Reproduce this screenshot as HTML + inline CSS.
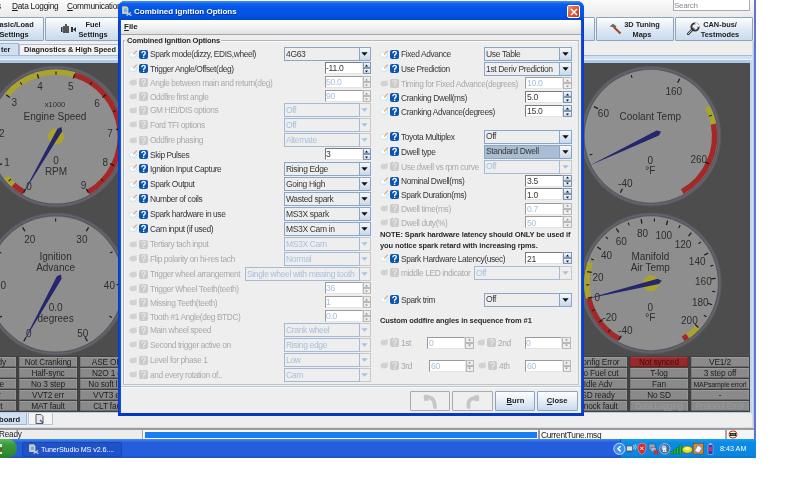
<!DOCTYPE html><html><head><meta charset="utf-8"><style>
*{margin:0;padding:0;box-sizing:border-box}
html,body{width:800px;height:480px;overflow:hidden;background:#fff}
body{position:relative;font-family:"Liberation Sans",sans-serif;font-size:8px;color:#222}
.ab{position:absolute}
.t{position:absolute;white-space:nowrap;line-height:1;will-change:transform}
.tb{position:absolute;border:1px solid #8ea4bd;border-radius:1px;background:linear-gradient(#fdfeff,#dde8f4 55%,#c9dbee);}
.bt{position:absolute;white-space:nowrap;will-change:transform;font-weight:bold;font-size:7.4px;line-height:1;color:#222;text-align:center}
.cell{position:absolute;height:10px;width:58px;background:#8a8a8a;border-top:1px solid #9c9c9c;border-left:1px solid #7a7a7a;border-bottom:1px solid #6c6c6c;border-right:1px solid #959595;font-size:8.3px;letter-spacing:-0.15px;line-height:9px;text-align:center;color:#1e1e1e;white-space:nowrap;overflow:visible;will-change:transform}
</style></head><body>

<div class="ab" style="left:0;top:0;width:756px;height:17px;background:linear-gradient(#fbfbfb,#f1f1f1 60%,#eaeaea)"></div>
<div class="t" style="left:-3px;top:1.8px;font-size:8.3px;letter-spacing:-0.2px;color:#151515">s</div>
<div class="t" style="left:12px;top:1.8px;font-size:8.3px;letter-spacing:-0.25px;color:#151515"><u>D</u>ata Logging</div>
<div class="t" style="left:66.7px;top:1.8px;font-size:8.3px;letter-spacing:-0.25px;color:#151515"><u>C</u>ommunications</div>
<div class="ab" style="left:673.4px;top:-1px;width:76.6px;height:12px;background:#fff;border:1px solid #a4acb6"></div>
<div class="t" style="left:674.4px;top:2.2px;font-size:8px;letter-spacing:-0.3px;color:#8a8a8a">Search</div>
<div class="ab" style="left:0;top:17px;width:754px;height:38px;background:#eeeeee"></div>
<div class="tb" style="left:-34px;top:17px;width:77.75px;height:24px"></div>
<div class="tb" style="left:45px;top:17px;width:79.00px;height:24px"></div>
<div class="tb" style="left:517px;top:17px;width:77.75px;height:24px"></div>
<div class="tb" style="left:596.25px;top:17px;width:77.50px;height:24px"></div>
<div class="tb" style="left:675px;top:17px;width:77.70px;height:24px"></div>
<div class="bt" style="left:-16px;top:20.5px;width:60px">Basic/Load</div>
<div class="bt" style="left:-16px;top:30.7px;width:60px">Settings</div>
<div class="bt" style="left:68px;top:20.5px;width:50px">Fuel</div>
<div class="bt" style="left:68px;top:30.7px;width:50px">Settings</div>
<div class="bt" style="left:617px;top:20.5px;width:50px">3D Tuning</div>
<div class="bt" style="left:617px;top:30.7px;width:50px">Maps</div>
<div class="bt" style="left:695px;top:20.5px;width:50px">CAN-bus/</div>
<div class="bt" style="left:695px;top:30.7px;width:50px">Testmodes</div>
<svg class="ab" style="left:60px;top:20px" width="20" height="16" viewBox="0 0 20 16">
<rect x="1" y="7" width="1.5" height="5" fill="#333"/><rect x="3" y="6" width="6" height="7" fill="#555"/><rect x="5" y="4" width="2" height="2" fill="#555"/>
<rect x="11" y="7" width="2" height="5" fill="#333"/><path d="M13 9.5 L16 7 L16 12 Z" fill="#333"/></svg>
<svg class="ab" style="left:609px;top:23px" width="14" height="12" viewBox="0 0 14 12">
<path d="M0.5 3.5 L4 0.8 L7.5 3.2 L5.5 5.5 L3.5 4 Z" fill="#6a6a6a"/><path d="M5 4.2 L11.5 10.5" stroke="#a4482a" stroke-width="2.2"/></svg>
<svg class="ab" style="left:686px;top:22px" width="14" height="14" viewBox="0 0 14 14">
<path d="M7.2 6.8 L2.2 11.8" stroke="#333" stroke-width="2.6" stroke-linecap="round"/><path d="M7.2 6.8 L2.2 11.8" stroke="#ddd" stroke-width="1" stroke-linecap="round"/>
<circle cx="9" cy="5" r="3.6" fill="none" stroke="#333" stroke-width="1.9"/><path d="M9.5 1 L13 4.5" stroke="#eee" stroke-width="2.2"/></svg>
<div class="ab" style="left:-5px;top:43px;width:24px;height:13px;background:#cfe0f3;border:1px solid #9fb6cf;border-bottom:none"></div>
<div class="t" style="left:1px;top:46px;font-weight:bold;font-size:7.4px">ter</div>
<div class="ab" style="left:19px;top:44px;width:110px;height:11px;background:#f2f2f2;border:1px solid #b0bccb;border-bottom:none;border-left:1px solid #a9bcd3"></div>
<div class="t" style="left:24px;top:46px;font-weight:bold;font-size:7.4px">Diagnostics &amp; High Speed Loggers</div>
<div class="ab" style="left:0;top:55px;width:754px;height:1px;background:#a5bad2"></div>
<div class="ab" style="left:0;top:56px;width:754px;height:3px;background:#cde0f4"></div>
<div class="ab" style="left:0;top:59px;width:754px;height:1px;background:#eef3f8"></div>
<div class="ab" style="left:0;top:60px;width:754px;height:3px;background:#b0c8e6"></div>
<div class="ab" style="left:750px;top:60px;width:2px;height:353px;background:#c4d6ec"></div>
<div class="ab" style="left:752px;top:41px;width:2px;height:386px;background:linear-gradient(90deg,#dde8f4,#a9bfdc)"></div>
<div class="ab" style="left:0;top:63px;width:750px;height:349px;background:#4d4d4d"></div>
<div class="ab" style="left:0;top:412px;width:752px;height:1px;background:#b8cce4"></div>
<div class="ab" style="left:0;top:356px;width:750px;height:56px;background:#404040"></div>
<div class="cell" style="left:-42.25px;top:357px;text-align:right;padding-right:9px;">Fuel Ready</div>
<div class="cell" style="left:-42.25px;top:368px;text-align:right;padding-right:0px;"></div>
<div class="cell" style="left:-42.25px;top:379px;text-align:right;padding-right:11px;">Idle active</div>
<div class="cell" style="left:-42.25px;top:390px;text-align:right;padding-right:14.5px;">VVT1 err</div>
<div class="cell" style="left:-42.25px;top:401px;text-align:right;padding-right:12.5px;">EGT fault</div>
<div class="cell" style="left:18.75px;top:357px;">Not Cranking</div>
<div class="cell" style="left:18.75px;top:368px;">Half-sync</div>
<div class="cell" style="left:18.75px;top:379px;">No 3 step</div>
<div class="cell" style="left:18.75px;top:390px;">VVT2 err</div>
<div class="cell" style="left:18.75px;top:401px;">MAT fault</div>
<div class="cell" style="left:79.75px;top:357px;">ASE OFF</div>
<div class="cell" style="left:79.75px;top:368px;">N2O 1 off</div>
<div class="cell" style="left:79.75px;top:379px;">No soft limit</div>
<div class="cell" style="left:79.75px;top:390px;">VVT3 err</div>
<div class="cell" style="left:79.75px;top:401px;">CLT fault</div>
<div class="cell" style="left:568.5px;top:357px;">Config Error</div>
<div class="cell" style="left:568.5px;top:368px;">No Fuel cut</div>
<div class="cell" style="left:568.5px;top:379px;">Idle Adv</div>
<div class="cell" style="left:568.5px;top:390px;">SD ready</div>
<div class="cell" style="left:568.5px;top:401px;">Knock fault</div>
<div class="cell" style="left:629.5px;top:357px;background:#9a2a2a;color:#3a0a0a;border-color:#b03a3a #8a2020 #7a1a1a #8a2424;">Not synced</div>
<div class="cell" style="left:629.5px;top:368px;">T-log</div>
<div class="cell" style="left:629.5px;top:379px;">Fan</div>
<div class="cell" style="left:629.5px;top:390px;">No SD</div>
<div class="cell" style="left:629.5px;top:401px;color:#9a9a9a;">Data Logging</div>
<div class="cell" style="left:690.5px;top:357px;">VE1/2</div>
<div class="cell" style="left:690.5px;top:368px;">3 step off</div>
<div class="cell" style="left:690.5px;top:379px;font-size:7px;letter-spacing:-0.2px;">MAPsample error!</div>
<div class="cell" style="left:690.5px;top:390px;">-</div>
<div class="cell" style="left:690.5px;top:401px;color:#9a9a9a;">Protocol Error</div>
<div class="ab" style="left:0;top:413px;width:752px;height:15px;background:#eeeeee"></div>
<div class="ab" style="left:-5px;top:413px;width:32px;height:12px;background:#cfe0f3;border:1px solid #9fb6cf;border-top:none"></div>
<div class="t" style="left:-1px;top:416px;font-weight:bold;font-size:7.6px">board</div>
<div class="ab" style="left:28px;top:413px;width:25px;height:12px;background:#f4f4f4;border:1px solid #b8c4d2;border-top:none"></div>
<svg class="ab" style="left:35px;top:414px" width="10" height="10" viewBox="0 0 10 10"><path d="M1 0.5 H6 L8 2.5 V9.5 H1 Z" fill="#e8e8f0" stroke="#333" stroke-width="0.8"/><path d="M5 6 L8 9" stroke="#557" stroke-width="1.2"/></svg>
<div class="ab" style="left:0;top:427px;width:754px;height:1px;background:#d2deec"></div>
<div class="ab" style="left:0;top:428px;width:754px;height:11px;background:#ededed;border-top:2px solid #9c9c9c"></div>
<div class="t" style="left:-1px;top:431px;font-size:8.2px;letter-spacing:-0.2px">Ready</div>
<div class="ab" style="left:142px;top:430px;width:396px;height:9px;background:#f8f8f8;border-left:1px solid #a8a29a"></div>
<div class="ab" style="left:144.5px;top:431.5px;width:392.5px;height:6.3px;background:#1a7ef0"></div>
<div class="ab" style="left:538px;top:430px;width:2px;height:9px;background:#9a9a9a"></div>
<div class="ab" style="left:540px;top:430px;width:185px;height:9px;background:#fafafa"></div>
<div class="t" style="left:541px;top:431.2px;font-size:8.4px;letter-spacing:-0.3px">CurrentTune.msq</div>
<div class="ab" style="left:725px;top:430px;width:2px;height:9px;background:#a6a6a6"></div>
<div class="ab" style="left:727px;top:430px;width:26px;height:9px;background:#f4f4f4"></div>
<svg class="ab" style="left:728px;top:430px" width="10" height="9" viewBox="0 0 10 9"><ellipse cx="5" cy="4.5" rx="4" ry="3.6" fill="none" stroke="#c22" stroke-width="1"/><rect x="2" y="3" width="6" height="3" fill="#222"/><rect x="3" y="3.8" width="4" height="1.4" fill="#3a3"/></svg>
<div class="ab" style="left:754px;top:0;width:2px;height:439px;background:#6472d6"></div>
<div class="ab" style="left:0;top:439px;width:756px;height:19px;background:linear-gradient(#3f8cf3,#245edc 18%,#245edc 85%,#1d4fc0)"></div>
<div class="ab" style="left:-40px;top:439px;width:57px;height:19px;border-radius:0 10px 10px 0;background:linear-gradient(#5dbb5d,#3a9a3a 30%,#2f8a2f 80%,#2c7a2c)"></div>
<div class="ab" style="left:22px;top:442px;width:100px;height:14.5px;border-radius:2px;background:#1e52c8;border:1px solid #1a48b0"></div>
<svg class="ab" style="left:29px;top:444px" width="10" height="10" viewBox="0 0 10 10"><path d="M0.5 0.8 H5 L6 2 V7.5 H0.5 Z" fill="#b8cce4" stroke="#e8d890" stroke-width="0.8"/><path d="M2 2.5 H5 V6 H2 Z" fill="#6f9ad0" opacity="0.7"/><path d="M4 7 L9.5 9.5 M4.5 9.5 L9 6.5" stroke="#c8ccd4" stroke-width="1.3"/></svg>
<div class="ab" style="left:0;top:444px;width:1.5px;height:3px;background:#f0e8d8"></div>
<div class="ab" style="left:0;top:448px;width:1.5px;height:3px;background:#6a5a2a"></div>
<div class="ab" style="left:0;top:452px;width:1.5px;height:2px;background:#e8e8d0"></div>
<div class="t" style="left:41px;top:445.6px;font-size:7.2px;letter-spacing:-0.1px;color:#fff">TunerStudio MS v2.6....</div>
<div class="ab" style="left:620.3px;top:439px;width:135.7px;height:19px;background:linear-gradient(#17a0f3,#0c8ae4 20%,#0b86e0 85%,#0a78d0);border-left:1px solid #0a5bd0"></div>
<div class="t" style="left:720px;top:445px;font-size:7.2px;color:#fff">8:43 AM</div>
<svg class="ab" style="left:610px;top:441px" width="110" height="16" viewBox="0 0 110 16">
<circle cx="9.4" cy="7.8" r="5.6" fill="#3d8ef0" stroke="#cfe6ff" stroke-width="0.9"/><path d="M10.6 5.2 L8 7.8 L10.6 10.4" stroke="#fff" stroke-width="1.5" fill="none"/>
<rect x="16.5" y="5" width="6" height="5" fill="#d8e0ea" stroke="#44526a" stroke-width="0.7"/><rect x="17.5" y="10" width="4" height="1.5" fill="#556"/><path d="M23.5 4 q1.6 2 0 4 M25 3 q2.6 3 0 6" stroke="#e8f0ff" stroke-width="0.7" fill="none"/>
<path d="M28 3.5 L31.9 2 L35.8 3.5 L35.8 7.5 Q35.8 11.5 31.9 13.5 Q28 11.5 28 7.5 Z" fill="#d42a2a" stroke="#f4c0c0" stroke-width="0.5"/><path d="M30.3 5.8 L33.5 9 M33.5 5.8 L30.3 9" stroke="#fff" stroke-width="1"/>
<rect x="39" y="3" width="6" height="6" fill="#9aa4c0" stroke="#445" stroke-width="0.5"/><rect x="41" y="6.5" width="5" height="4" fill="#b0b8d0" stroke="#445" stroke-width="0.4"/><path d="M44 9 L48.5 13.5 M48.5 9 L44 13.5" stroke="#e02020" stroke-width="1.4"/>
<circle cx="54.8" cy="7.8" r="5.2" fill="#48689a" stroke="#c8d4e8" stroke-width="0.7"/><circle cx="54" cy="6.8" r="2.5" fill="#b8c8e0"/><text x="52.6" y="10.6" font-size="7" fill="#fff" font-family="Liberation Sans" font-weight="bold">a</text>
<path d="M61 13 h2 v-2.5 h-2z M63.8 13 h2 v-4.5 h-2z M66.6 13 h2 v-6.5 h-2z M69.4 13 h2 v-9 h-2z" fill="#22c022" stroke="#0a600a" stroke-width="0.4"/>
<ellipse cx="77.3" cy="8.6" rx="5.2" ry="3.6" fill="#e8e020" stroke="#6a6010" stroke-width="0.7"/><ellipse cx="77.3" cy="7.6" rx="2.5" ry="1.6" fill="#fff890"/>
<rect x="83.2" y="2.5" width="10" height="10.5" fill="#e0882a" stroke="#5a4020" stroke-width="0.5"/><path d="M84.5 10 L88 4 L92 7 L89 12 Z" fill="#f0f4ff" stroke="#4a6ab0" stroke-width="0.6"/>
<rect x="98" y="3.5" width="5" height="10" rx="1" fill="#2a3ad0" stroke="#c0c8e8" stroke-width="0.6"/><rect x="99.5" y="2.2" width="2" height="1.5" fill="#c0c8e8"/><rect x="99" y="6" width="3" height="4" fill="#e03030"/>
</svg>
<svg class="ab" style="left:0;top:63px;will-change:transform" width="750" height="294" viewBox="0 63 750 294">
<circle cx="56" cy="136.5" r="71" fill="#58585f"/>
<circle cx="56" cy="136.5" r="69.1" fill="none" stroke="#65656d" stroke-width="1.4"/>
<circle cx="56" cy="136.5" r="67.1" fill="#8e8e8e"/>
<path d="M23.85 192.19 A64.3 64.3 0 0 1 13.31 184.58" fill="none" stroke="#a42828" stroke-width="5.4"/>
<path d="M13.31 184.58 A64.3 64.3 0 0 1 6.24 177.23" fill="none" stroke="#aaa42c" stroke-width="5.4"/>
<path d="M6.74 95.17 A64.3 64.3 0 0 1 74.48 74.91" fill="none" stroke="#aaa42c" stroke-width="5.4"/>
<path d="M74.48 74.91 A64.3 64.3 0 0 1 88.15 192.19" fill="none" stroke="#a42828" stroke-width="5.4"/>
<line x1="25.75" y1="188.89" x2="23.50" y2="192.79" stroke="#1c1c1c" stroke-width="1.3"/>
<line x1="1.94" y1="163.65" x2="-2.09" y2="165.67" stroke="#1c1c1c" stroke-width="1.3"/>
<line x1="-4.09" y1="129.48" x2="-8.56" y2="128.95" stroke="#1c1c1c" stroke-width="1.3"/>
<line x1="9.65" y1="97.61" x2="6.21" y2="94.72" stroke="#1c1c1c" stroke-width="1.3"/>
<line x1="38.65" y1="78.54" x2="37.36" y2="74.23" stroke="#1c1c1c" stroke-width="1.3"/>
<line x1="73.35" y1="78.54" x2="74.64" y2="74.23" stroke="#1c1c1c" stroke-width="1.3"/>
<line x1="102.35" y1="97.61" x2="105.79" y2="94.72" stroke="#1c1c1c" stroke-width="1.3"/>
<line x1="116.09" y1="129.48" x2="120.56" y2="128.95" stroke="#1c1c1c" stroke-width="1.3"/>
<line x1="110.06" y1="163.65" x2="114.09" y2="165.67" stroke="#1c1c1c" stroke-width="1.3"/>
<line x1="86.25" y1="188.89" x2="88.50" y2="192.79" stroke="#1c1c1c" stroke-width="1.3"/>
<line x1="10.90" y1="179.05" x2="8.72" y2="181.11" stroke="#1c1c1c" stroke-width="1.1"/>
<line x1="-5.06" y1="147.27" x2="-8.01" y2="147.79" stroke="#1c1c1c" stroke-width="1.1"/>
<line x1="-0.93" y1="111.94" x2="-3.68" y2="110.75" stroke="#1c1c1c" stroke-width="1.1"/>
<line x1="21.93" y1="84.70" x2="20.28" y2="82.19" stroke="#1c1c1c" stroke-width="1.1"/>
<line x1="56.00" y1="74.50" x2="56.00" y2="71.50" stroke="#1c1c1c" stroke-width="1.1"/>
<line x1="90.07" y1="84.70" x2="91.72" y2="82.19" stroke="#1c1c1c" stroke-width="1.1"/>
<line x1="112.93" y1="111.94" x2="115.68" y2="110.75" stroke="#1c1c1c" stroke-width="1.1"/>
<line x1="117.06" y1="147.27" x2="120.01" y2="147.79" stroke="#1c1c1c" stroke-width="1.1"/>
<line x1="101.10" y1="179.05" x2="103.28" y2="181.11" stroke="#1c1c1c" stroke-width="1.1"/>
<text x="29.00" y="189.60" font-size="10" text-anchor="middle" fill="#2e2e2e" font-family="Liberation Sans">0</text>
<text x="7.00" y="166.40" font-size="10" text-anchor="middle" fill="#2e2e2e" font-family="Liberation Sans">1</text>
<text x="1.70" y="136.90" font-size="10" text-anchor="middle" fill="#2e2e2e" font-family="Liberation Sans">2</text>
<text x="14.20" y="106.40" font-size="10" text-anchor="middle" fill="#2e2e2e" font-family="Liberation Sans">3</text>
<text x="40.00" y="89.60" font-size="10" text-anchor="middle" fill="#2e2e2e" font-family="Liberation Sans">4</text>
<text x="70.80" y="89.80" font-size="10" text-anchor="middle" fill="#2e2e2e" font-family="Liberation Sans">5</text>
<text x="97.00" y="106.60" font-size="10" text-anchor="middle" fill="#2e2e2e" font-family="Liberation Sans">6</text>
<text x="110.00" y="136.60" font-size="10" text-anchor="middle" fill="#2e2e2e" font-family="Liberation Sans">7</text>
<text x="105.40" y="166.40" font-size="10" text-anchor="middle" fill="#2e2e2e" font-family="Liberation Sans">8</text>
<text x="83.50" y="188.90" font-size="10" text-anchor="middle" fill="#2e2e2e" font-family="Liberation Sans">9</text>
<text x="55.00" y="107.04" font-size="7.6" text-anchor="middle" fill="#2e2e2e" font-family="Liberation Sans">x1000</text>
<text x="55.00" y="119.60" font-size="10" text-anchor="middle" fill="#2e2e2e" font-family="Liberation Sans">Engine Speed</text>
<text x="56.00" y="163.90" font-size="10" text-anchor="middle" fill="#2e2e2e" font-family="Liberation Sans">0</text>
<text x="56.00" y="174.60" font-size="10" text-anchor="middle" fill="#2e2e2e" font-family="Liberation Sans">RPM</text>
<circle cx="56" cy="136.5" r="8" fill="#aaa42c"/>
<path d="M61.50 126.97 L57.41 128.65 L22.00 195.39 L62.09 131.35 Z" fill="#26266c"/>
<circle cx="55.6" cy="284" r="71.5" fill="#58585f"/>
<circle cx="55.6" cy="284" r="69.6" fill="none" stroke="#65656d" stroke-width="1.4"/>
<circle cx="55.6" cy="284" r="67.6" fill="#8e8e8e"/>
<line x1="26.03" y1="337.35" x2="23.84" y2="341.29" stroke="#1c1c1c" stroke-width="1.3"/>
<line x1="-5.40" y1="284.64" x2="-9.90" y2="284.69" stroke="#1c1c1c" stroke-width="1.3"/>
<line x1="24.92" y1="231.28" x2="22.65" y2="227.39" stroke="#1c1c1c" stroke-width="1.3"/>
<line x1="86.28" y1="231.28" x2="88.55" y2="227.39" stroke="#1c1c1c" stroke-width="1.3"/>
<line x1="116.60" y1="284.64" x2="121.10" y2="284.69" stroke="#1c1c1c" stroke-width="1.3"/>
<line x1="85.17" y1="337.35" x2="87.36" y2="341.29" stroke="#1c1c1c" stroke-width="1.3"/>
<line x1="1.92" y1="316.00" x2="-0.66" y2="317.54" stroke="#1c1c1c" stroke-width="1.1"/>
<line x1="1.26" y1="253.13" x2="-1.35" y2="251.65" stroke="#1c1c1c" stroke-width="1.1"/>
<line x1="55.60" y1="221.50" x2="55.60" y2="218.50" stroke="#1c1c1c" stroke-width="1.1"/>
<line x1="109.94" y1="253.13" x2="112.55" y2="251.65" stroke="#1c1c1c" stroke-width="1.1"/>
<line x1="109.28" y1="316.00" x2="111.86" y2="317.54" stroke="#1c1c1c" stroke-width="1.1"/>
<text x="28.75" y="336.70" font-size="10" text-anchor="middle" fill="#2e2e2e" font-family="Liberation Sans">0</text>
<text x="0.60" y="289.20" font-size="10" text-anchor="middle" fill="#2e2e2e" font-family="Liberation Sans">10</text>
<text x="29.70" y="243.00" font-size="10" text-anchor="middle" fill="#2e2e2e" font-family="Liberation Sans">20</text>
<text x="81.90" y="243.00" font-size="10" text-anchor="middle" fill="#2e2e2e" font-family="Liberation Sans">30</text>
<text x="109.40" y="289.20" font-size="10" text-anchor="middle" fill="#2e2e2e" font-family="Liberation Sans">40</text>
<text x="82.80" y="336.70" font-size="10" text-anchor="middle" fill="#2e2e2e" font-family="Liberation Sans">50</text>
<text x="55.60" y="260.20" font-size="10" text-anchor="middle" fill="#2e2e2e" font-family="Liberation Sans">Ignition</text>
<text x="55.60" y="271.10" font-size="10" text-anchor="middle" fill="#2e2e2e" font-family="Liberation Sans">Advance</text>
<text x="55.60" y="311.10" font-size="10" text-anchor="middle" fill="#2e2e2e" font-family="Liberation Sans">0.0</text>
<text x="55.60" y="321.70" font-size="10" text-anchor="middle" fill="#2e2e2e" font-family="Liberation Sans">degrees</text>
<path d="M60.93 274.38 L56.87 276.13 L22.63 343.47 L61.60 278.75 Z" fill="#26266c"/>
<circle cx="651" cy="136.25" r="70.3" fill="#58585f"/>
<circle cx="651" cy="136.25" r="68.39999999999999" fill="none" stroke="#65656d" stroke-width="1.4"/>
<circle cx="651" cy="136.25" r="66.39999999999999" fill="#8e8e8e"/>
<path d="M707.41 106.88 A63.599999999999994 63.599999999999994 0 0 1 713.43 124.11" fill="none" stroke="#aaa42c" stroke-width="5.4"/>
<path d="M713.43 124.11 A63.599999999999994 63.599999999999994 0 0 1 682.22 191.66" fill="none" stroke="#a42828" stroke-width="5.4"/>
<line x1="622.47" y1="188.80" x2="620.32" y2="192.76" stroke="#1c1c1c" stroke-width="1.3"/>
<line x1="597.96" y1="108.64" x2="593.97" y2="106.56" stroke="#1c1c1c" stroke-width="1.3"/>
<line x1="677.68" y1="82.73" x2="679.69" y2="78.71" stroke="#1c1c1c" stroke-width="1.3"/>
<line x1="704.97" y1="161.99" x2="709.04" y2="163.93" stroke="#1c1c1c" stroke-width="1.3"/>
<line x1="592.38" y1="154.17" x2="589.51" y2="155.05" stroke="#1c1c1c" stroke-width="1.1"/>
<line x1="632.06" y1="77.95" x2="631.13" y2="75.10" stroke="#1c1c1c" stroke-width="1.1"/>
<line x1="708.96" y1="116.29" x2="711.80" y2="115.32" stroke="#1c1c1c" stroke-width="1.1"/>
<text x="625.30" y="187.00" font-size="10" text-anchor="middle" fill="#2e2e2e" font-family="Liberation Sans">-40</text>
<text x="603.40" y="116.60" font-size="10" text-anchor="middle" fill="#2e2e2e" font-family="Liberation Sans">60</text>
<text x="673.75" y="94.85" font-size="10" text-anchor="middle" fill="#2e2e2e" font-family="Liberation Sans">160</text>
<text x="698.75" y="163.00" font-size="10" text-anchor="middle" fill="#2e2e2e" font-family="Liberation Sans">260</text>
<text x="650.30" y="119.85" font-size="10" text-anchor="middle" fill="#2e2e2e" font-family="Liberation Sans">Coolant Temp</text>
<text x="650.30" y="163.60" font-size="10" text-anchor="middle" fill="#2e2e2e" font-family="Liberation Sans">0</text>
<text x="650.30" y="174.10" font-size="10" text-anchor="middle" fill="#2e2e2e" font-family="Liberation Sans">°F</text>
<path d="M660.93 131.51 L656.61 130.58 L589.62 165.52 L658.93 135.46 Z" fill="#26266c"/>
<circle cx="651" cy="283.25" r="70.8" fill="#58585f"/>
<circle cx="651" cy="283.25" r="68.89999999999999" fill="none" stroke="#65656d" stroke-width="1.4"/>
<circle cx="651" cy="283.25" r="66.89999999999999" fill="#8e8e8e"/>
<path d="M619.44 339.04 A64.1 64.1 0 0 1 588.72 298.43" fill="none" stroke="#a42828" stroke-width="5.4"/>
<path d="M588.72 298.43 A64.1 64.1 0 0 1 590.39 262.38" fill="none" stroke="#aaa42c" stroke-width="5.4"/>
<path d="M697.88 326.97 A64.1 64.1 0 0 1 687.49 335.95" fill="none" stroke="#aaa42c" stroke-width="5.4"/>
<path d="M687.49 335.95 A64.1 64.1 0 0 1 683.05 338.76" fill="none" stroke="#a42828" stroke-width="5.4"/>
<line x1="621.31" y1="335.73" x2="619.09" y2="339.65" stroke="#1c1c1c" stroke-width="1.3"/>
<line x1="602.76" y1="319.43" x2="599.16" y2="322.13" stroke="#1c1c1c" stroke-width="1.3"/>
<line x1="592.31" y1="297.07" x2="587.93" y2="298.10" stroke="#1c1c1c" stroke-width="1.3"/>
<line x1="591.69" y1="272.39" x2="587.26" y2="271.58" stroke="#1c1c1c" stroke-width="1.3"/>
<line x1="601.01" y1="249.53" x2="597.28" y2="247.01" stroke="#1c1c1c" stroke-width="1.3"/>
<line x1="618.71" y1="232.32" x2="616.30" y2="228.52" stroke="#1c1c1c" stroke-width="1.3"/>
<line x1="641.83" y1="223.65" x2="641.14" y2="219.20" stroke="#1c1c1c" stroke-width="1.3"/>
<line x1="666.48" y1="224.97" x2="667.63" y2="220.62" stroke="#1c1c1c" stroke-width="1.3"/>
<line x1="688.54" y1="236.06" x2="691.34" y2="232.54" stroke="#1c1c1c" stroke-width="1.3"/>
<line x1="704.30" y1="255.06" x2="708.28" y2="252.95" stroke="#1c1c1c" stroke-width="1.3"/>
<line x1="711.13" y1="278.78" x2="715.62" y2="278.45" stroke="#1c1c1c" stroke-width="1.3"/>
<line x1="707.89" y1="303.25" x2="712.13" y2="304.75" stroke="#1c1c1c" stroke-width="1.3"/>
<line x1="695.10" y1="324.37" x2="698.39" y2="327.44" stroke="#1c1c1c" stroke-width="1.3"/>
<line x1="610.20" y1="329.67" x2="608.22" y2="331.92" stroke="#1c1c1c" stroke-width="1.1"/>
<line x1="595.02" y1="309.43" x2="592.30" y2="310.70" stroke="#1c1c1c" stroke-width="1.1"/>
<line x1="589.22" y1="284.80" x2="586.22" y2="284.88" stroke="#1c1c1c" stroke-width="1.1"/>
<line x1="593.78" y1="259.91" x2="591.00" y2="258.78" stroke="#1c1c1c" stroke-width="1.1"/>
<line x1="607.92" y1="238.94" x2="605.83" y2="236.78" stroke="#1c1c1c" stroke-width="1.1"/>
<line x1="629.29" y1="225.39" x2="628.24" y2="222.58" stroke="#1c1c1c" stroke-width="1.1"/>
<line x1="654.30" y1="221.54" x2="654.46" y2="218.54" stroke="#1c1c1c" stroke-width="1.1"/>
<line x1="678.76" y1="228.03" x2="680.10" y2="225.35" stroke="#1c1c1c" stroke-width="1.1"/>
<line x1="698.56" y1="243.78" x2="700.87" y2="241.87" stroke="#1c1c1c" stroke-width="1.1"/>
<line x1="710.39" y1="266.15" x2="713.27" y2="265.32" stroke="#1c1c1c" stroke-width="1.1"/>
<line x1="712.26" y1="291.38" x2="715.24" y2="291.78" stroke="#1c1c1c" stroke-width="1.1"/>
<line x1="703.87" y1="315.25" x2="706.43" y2="316.81" stroke="#1c1c1c" stroke-width="1.1"/>
<text x="625.30" y="334.20" font-size="10" text-anchor="middle" fill="#2e2e2e" font-family="Liberation Sans">-40</text>
<text x="609.70" y="320.50" font-size="10" text-anchor="middle" fill="#2e2e2e" font-family="Liberation Sans">-20</text>
<text x="597.20" y="301.40" font-size="10" text-anchor="middle" fill="#2e2e2e" font-family="Liberation Sans">0</text>
<text x="598.00" y="280.50" font-size="10" text-anchor="middle" fill="#2e2e2e" font-family="Liberation Sans">20</text>
<text x="606.60" y="259.20" font-size="10" text-anchor="middle" fill="#2e2e2e" font-family="Liberation Sans">40</text>
<text x="621.25" y="244.50" font-size="10" text-anchor="middle" fill="#2e2e2e" font-family="Liberation Sans">60</text>
<text x="642.50" y="236.70" font-size="10" text-anchor="middle" fill="#2e2e2e" font-family="Liberation Sans">80</text>
<text x="663.75" y="238.90" font-size="10" text-anchor="middle" fill="#2e2e2e" font-family="Liberation Sans">100</text>
<text x="683.00" y="248.30" font-size="10" text-anchor="middle" fill="#2e2e2e" font-family="Liberation Sans">120</text>
<text x="697.20" y="264.85" font-size="10" text-anchor="middle" fill="#2e2e2e" font-family="Liberation Sans">140</text>
<text x="703.40" y="284.50" font-size="10" text-anchor="middle" fill="#2e2e2e" font-family="Liberation Sans">160</text>
<text x="700.30" y="305.50" font-size="10" text-anchor="middle" fill="#2e2e2e" font-family="Liberation Sans">180</text>
<text x="689.40" y="324.20" font-size="10" text-anchor="middle" fill="#2e2e2e" font-family="Liberation Sans">200</text>
<text x="650.30" y="260.20" font-size="10" text-anchor="middle" fill="#2e2e2e" font-family="Liberation Sans">Manifold</text>
<text x="650.30" y="271.10" font-size="10" text-anchor="middle" fill="#2e2e2e" font-family="Liberation Sans">Air Temp</text>
<text x="650.30" y="311.10" font-size="10" text-anchor="middle" fill="#2e2e2e" font-family="Liberation Sans">0</text>
<text x="650.30" y="321.10" font-size="10" text-anchor="middle" fill="#2e2e2e" font-family="Liberation Sans">°F</text>
<circle cx="651" cy="283.25" r="8" fill="#aaa42c"/>
<path d="M661.69 280.64 L657.65 278.85 L584.93 299.35 L658.93 284.10 Z" fill="#26266c"/>
</svg>
<div class="ab" style="left:118px;top:1px;width:466px;height:415px;background:#0a3fd6;border-radius:7px 7px 0 0"></div>
<div class="ab" style="left:118px;top:1px;width:466px;height:19px;border-radius:7px 7px 0 0;background:linear-gradient(#4a90f8,#0f5ff0 15%,#0355e6 40%,#0052e0 80%,#0046c8)"></div>
<div class="ab" style="left:118px;top:20px;width:3px;height:396px;background:linear-gradient(90deg,#0637c4,#1050e4)"></div>
<div class="ab" style="left:581px;top:20px;width:3px;height:396px;background:linear-gradient(90deg,#1050e4,#0637c4)"></div>
<div class="ab" style="left:118px;top:413px;width:466px;height:3px;background:#0637c4"></div>
<svg class="ab" style="left:122px;top:6px" width="10" height="10" viewBox="0 0 10 10"><path d="M0.5 0.8 H5 L6 2 V7.5 H0.5 Z" fill="#b8cce4" stroke="#e8d890" stroke-width="0.8"/><path d="M2 2.5 H5 V6 H2 Z" fill="#6f9ad0" opacity="0.7"/><path d="M4 7 L9.5 9.5 M4.5 9.5 L9 6.5" stroke="#c8ccd4" stroke-width="1.3"/></svg>
<div class="t" style="left:134px;top:7.5px;font-size:8px;font-weight:bold;color:#fff;letter-spacing:0px;text-shadow:0.5px 0.5px 0 #0a2a90">Combined Ignition Options</div>
<div class="ab" style="left:567px;top:5px;width:13px;height:13px;border-radius:2px;background:linear-gradient(135deg,#f09070,#e05a3a 45%,#c83a1c);border:1px solid #fff"></div>
<svg class="ab" style="left:569.5px;top:7.5px" width="8" height="8" viewBox="0 0 8 8"><path d="M1 1 L7 7 M7 1 L1 7" stroke="#fff" stroke-width="1.5"/></svg>
<div class="ab" style="left:121px;top:20px;width:460px;height:15px;background:linear-gradient(#ffffff,#f3f3f3 50%,#e0e0e0);border-bottom:1px solid #a0a6ae"></div>
<div class="t" style="left:124px;top:23px;font-size:8px;font-weight:bold;color:#222"><u>F</u>ile</div>
<div class="ab" style="left:121px;top:35px;width:460px;height:378px;background:#eeeeee"></div>
<div class="ab" style="left:123px;top:40px;width:456px;height:345px;border:1px solid #b5b5b5;border-right-color:#c4c4c4;border-bottom-color:#c4c4c4;box-shadow:inset 1px 1px 0 #fafafa"></div>
<div class="ab" style="left:125px;top:36px;width:96px;height:8px;background:#eeeeee"></div>
<div class="t" style="left:127px;top:36.5px;font-size:7.6px;font-weight:bold;letter-spacing:-0.18px;color:#2a2a2a">Combined Ignition Options</div>
<div class="ab" style="left:121px;top:386px;width:460px;height:1px;background:#b8c8da"></div>
<div class="ab" style="left:121px;top:387px;width:460px;height:1px;background:#fafafa"></div>
<svg class="ab" style="left:129px;top:50px" width="9" height="8" viewBox="0 0 9 8"><ellipse cx="4" cy="5" rx="4" ry="3" fill="#cfe6f6"/><ellipse cx="3.7" cy="4.7" rx="2.9" ry="2" fill="#fbfdff"/><path d="M4.2 4.6 L6.8 1.7" stroke="#e6b060" stroke-width="1.05"/><path d="M6.7 1.8 L7.7 0.6" stroke="#ea8ca4" stroke-width="1.1"/></svg>
<svg class="ab" style="left:139px;top:50px" width="9" height="9" viewBox="0 0 9 9"><rect x="0" y="0" width="9" height="9" rx="2" fill="#0a55b0"/><path d="M2.9 3.2 Q2.9 1.4 4.6 1.4 Q6.3 1.4 6.3 3 Q6.3 4 5.2 4.6 Q4.6 5 4.6 5.9" fill="none" stroke="#ffffff" stroke-width="1.35"/><rect x="3.9" y="6.6" width="1.4" height="1.4" fill="#ffffff"/></svg>
<div class="t" style="left:150px;top:50.0px;font-size:8.4px;letter-spacing:-0.4px;color:#383838">Spark mode(dizzy, EDIS,wheel)</div>
<div class="ab" style="left:284px;top:47px;width:74.50px;height:14px;background:#eeeeee;border:1px solid #8aa6c6;border-right:none"></div>
<div class="ab" style="left:358.50px;top:47px;width:12.5px;height:14px;background:linear-gradient(#f6f9fc,#dfe8f2 50%,#c6d7ea);border:1px solid #8aa6c6"></div>
<svg class="ab" style="left:361.25px;top:52.00px" width="7" height="4" viewBox="0 0 7 4"><path d="M0.3 0.2 H6.7 L3.5 3.8 Z" fill="#111"/></svg>
<div class="t" style="left:286px;top:49.9px;font-size:8.5px;letter-spacing:-0.35px;color:#383838">4G63</div>
<svg class="ab" style="left:129px;top:64px" width="9" height="8" viewBox="0 0 9 8"><ellipse cx="4" cy="5" rx="4" ry="3" fill="#cfe6f6"/><ellipse cx="3.7" cy="4.7" rx="2.9" ry="2" fill="#fbfdff"/><path d="M4.2 4.6 L6.8 1.7" stroke="#e6b060" stroke-width="1.05"/><path d="M6.7 1.8 L7.7 0.6" stroke="#ea8ca4" stroke-width="1.1"/></svg>
<svg class="ab" style="left:139px;top:64px" width="9" height="9" viewBox="0 0 9 9"><rect x="0" y="0" width="9" height="9" rx="2" fill="#0a55b0"/><path d="M2.9 3.2 Q2.9 1.4 4.6 1.4 Q6.3 1.4 6.3 3 Q6.3 4 5.2 4.6 Q4.6 5 4.6 5.9" fill="none" stroke="#ffffff" stroke-width="1.35"/><rect x="3.9" y="6.6" width="1.4" height="1.4" fill="#ffffff"/></svg>
<div class="t" style="left:150px;top:64.5px;font-size:8.4px;letter-spacing:-0.4px;color:#383838">Trigger Angle/Offset(deg)</div>
<div class="ab" style="left:324.75px;top:62px;width:37.75px;height:12px;background:#fff;border-top:1.5px solid #7a7a7a;border-left:1.5px solid #7a7a7a;border-bottom:1px solid #e4e4e4;border-right:1px solid #e4e4e4"></div>
<div class="ab" style="left:362.50px;top:62px;width:8.50px;height:6.00px;background:linear-gradient(#f4f8fc,#c9d9ea);border:1px solid #7f98b6"></div>
<div class="ab" style="left:362.50px;top:68.00px;width:8.50px;height:6.00px;background:linear-gradient(#f4f8fc,#c9d9ea);border:1px solid #7f98b6"></div>
<svg class="ab" style="left:364.25px;top:63.50px" width="5" height="3" viewBox="0 0 5 3"><path d="M1 2.6 H4 L2.5 0.6 Z" fill="#111"/></svg>
<svg class="ab" style="left:364.25px;top:69.50px" width="5" height="3" viewBox="0 0 5 3"><path d="M1 0.4 H4 L2.5 2.4 Z" fill="#111"/></svg>
<div class="t" style="left:326.25px;top:64.3px;font-size:8.6px;letter-spacing:-0.3px;color:#383838">-11.0</div>
<svg class="ab" style="left:129px;top:78px" width="9" height="8" viewBox="0 0 9 8"><ellipse cx="4" cy="4.6" rx="3.5" ry="2.8" fill="#d2d2d2"/><path d="M4.5 2.5 L7.5 0.8 L7.5 7 L4.5 6 Z" fill="#d2d2d2"/></svg>
<svg class="ab" style="left:139px;top:78px" width="9" height="9" viewBox="0 0 9 9"><rect x="0" y="0" width="9" height="9" rx="2" fill="#cbcbcb"/><path d="M2.9 3.2 Q2.9 1.4 4.6 1.4 Q6.3 1.4 6.3 3 Q6.3 4 5.2 4.6 Q4.6 5 4.6 5.9" fill="none" stroke="#e4e4e4" stroke-width="1.35"/><rect x="3.9" y="6.6" width="1.4" height="1.4" fill="#e4e4e4"/></svg>
<div class="t" style="left:150px;top:78.5px;font-size:8.4px;letter-spacing:-0.4px;color:#a9a9a9">Angle between main and return(deg)</div>
<div class="ab" style="left:324.75px;top:76px;width:37.75px;height:12px;background:#fff;border-top:1.5px solid #9a9a9a;border-left:1.5px solid #9a9a9a;border-bottom:1px solid #e4e4e4;border-right:1px solid #e4e4e4"></div>
<div class="ab" style="left:362.50px;top:76px;width:8.50px;height:6.00px;background:#eeeeee;border:1px solid #b8b8b8"></div>
<div class="ab" style="left:362.50px;top:82.00px;width:8.50px;height:6.00px;background:#eeeeee;border:1px solid #b8b8b8"></div>
<svg class="ab" style="left:364.25px;top:77.50px" width="5" height="3" viewBox="0 0 5 3"><path d="M1 2.6 H4 L2.5 0.6 Z" fill="#9a9a9a"/></svg>
<svg class="ab" style="left:364.25px;top:83.50px" width="5" height="3" viewBox="0 0 5 3"><path d="M1 0.4 H4 L2.5 2.4 Z" fill="#9a9a9a"/></svg>
<div class="t" style="left:326.25px;top:78.3px;font-size:8.6px;letter-spacing:-0.3px;color:#a8c0dc">50.0</div>
<svg class="ab" style="left:129px;top:92px" width="9" height="8" viewBox="0 0 9 8"><ellipse cx="4" cy="4.6" rx="3.5" ry="2.8" fill="#d2d2d2"/><path d="M4.5 2.5 L7.5 0.8 L7.5 7 L4.5 6 Z" fill="#d2d2d2"/></svg>
<svg class="ab" style="left:139px;top:92px" width="9" height="9" viewBox="0 0 9 9"><rect x="0" y="0" width="9" height="9" rx="2" fill="#cbcbcb"/><path d="M2.9 3.2 Q2.9 1.4 4.6 1.4 Q6.3 1.4 6.3 3 Q6.3 4 5.2 4.6 Q4.6 5 4.6 5.9" fill="none" stroke="#e4e4e4" stroke-width="1.35"/><rect x="3.9" y="6.6" width="1.4" height="1.4" fill="#e4e4e4"/></svg>
<div class="t" style="left:150px;top:92.5px;font-size:8.4px;letter-spacing:-0.4px;color:#a9a9a9">Oddfire first angle</div>
<div class="ab" style="left:324.75px;top:90px;width:37.75px;height:12px;background:#fff;border-top:1.5px solid #9a9a9a;border-left:1.5px solid #9a9a9a;border-bottom:1px solid #e4e4e4;border-right:1px solid #e4e4e4"></div>
<div class="ab" style="left:362.50px;top:90px;width:8.50px;height:6.00px;background:#eeeeee;border:1px solid #b8b8b8"></div>
<div class="ab" style="left:362.50px;top:96.00px;width:8.50px;height:6.00px;background:#eeeeee;border:1px solid #b8b8b8"></div>
<svg class="ab" style="left:364.25px;top:91.50px" width="5" height="3" viewBox="0 0 5 3"><path d="M1 2.6 H4 L2.5 0.6 Z" fill="#9a9a9a"/></svg>
<svg class="ab" style="left:364.25px;top:97.50px" width="5" height="3" viewBox="0 0 5 3"><path d="M1 0.4 H4 L2.5 2.4 Z" fill="#9a9a9a"/></svg>
<div class="t" style="left:326.25px;top:92.3px;font-size:8.6px;letter-spacing:-0.3px;color:#a8c0dc">90</div>
<svg class="ab" style="left:129px;top:106px" width="9" height="8" viewBox="0 0 9 8"><ellipse cx="4" cy="4.6" rx="3.5" ry="2.8" fill="#d2d2d2"/><path d="M4.5 2.5 L7.5 0.8 L7.5 7 L4.5 6 Z" fill="#d2d2d2"/></svg>
<svg class="ab" style="left:139px;top:106px" width="9" height="9" viewBox="0 0 9 9"><rect x="0" y="0" width="9" height="9" rx="2" fill="#cbcbcb"/><path d="M2.9 3.2 Q2.9 1.4 4.6 1.4 Q6.3 1.4 6.3 3 Q6.3 4 5.2 4.6 Q4.6 5 4.6 5.9" fill="none" stroke="#e4e4e4" stroke-width="1.35"/><rect x="3.9" y="6.6" width="1.4" height="1.4" fill="#e4e4e4"/></svg>
<div class="t" style="left:150px;top:106.0px;font-size:8.4px;letter-spacing:-0.4px;color:#a9a9a9">GM HEI/DIS options</div>
<div class="ab" style="left:284px;top:103px;width:74.50px;height:14px;background:#eeeeee;border:1px solid #a4bad4;border-right:none"></div>
<div class="ab" style="left:358.50px;top:103px;width:12.5px;height:14px;background:#eeeeee;border:1px solid #c8c8c8"></div>
<div class="ab" style="left:358.50px;top:103px;width:1px;height:14px;background:#a4bad4"></div>
<svg class="ab" style="left:361.25px;top:108.00px" width="7" height="4" viewBox="0 0 7 4"><path d="M0.3 0.2 H6.7 L3.5 3.8 Z" fill="#a9c2de"/></svg>
<div class="t" style="left:286px;top:105.9px;font-size:8.5px;letter-spacing:-0.35px;color:#a8c0dc">Off</div>
<svg class="ab" style="left:129px;top:120px" width="9" height="8" viewBox="0 0 9 8"><ellipse cx="4" cy="4.6" rx="3.5" ry="2.8" fill="#d2d2d2"/><path d="M4.5 2.5 L7.5 0.8 L7.5 7 L4.5 6 Z" fill="#d2d2d2"/></svg>
<svg class="ab" style="left:139px;top:120px" width="9" height="9" viewBox="0 0 9 9"><rect x="0" y="0" width="9" height="9" rx="2" fill="#cbcbcb"/><path d="M2.9 3.2 Q2.9 1.4 4.6 1.4 Q6.3 1.4 6.3 3 Q6.3 4 5.2 4.6 Q4.6 5 4.6 5.9" fill="none" stroke="#e4e4e4" stroke-width="1.35"/><rect x="3.9" y="6.6" width="1.4" height="1.4" fill="#e4e4e4"/></svg>
<div class="t" style="left:150px;top:121.0px;font-size:8.4px;letter-spacing:-0.4px;color:#a9a9a9">Ford TFI options</div>
<div class="ab" style="left:284px;top:118px;width:74.50px;height:14px;background:#eeeeee;border:1px solid #a4bad4;border-right:none"></div>
<div class="ab" style="left:358.50px;top:118px;width:12.5px;height:14px;background:#eeeeee;border:1px solid #c8c8c8"></div>
<div class="ab" style="left:358.50px;top:118px;width:1px;height:14px;background:#a4bad4"></div>
<svg class="ab" style="left:361.25px;top:123.00px" width="7" height="4" viewBox="0 0 7 4"><path d="M0.3 0.2 H6.7 L3.5 3.8 Z" fill="#a9c2de"/></svg>
<div class="t" style="left:286px;top:120.9px;font-size:8.5px;letter-spacing:-0.35px;color:#a8c0dc">Off</div>
<svg class="ab" style="left:129px;top:136px" width="9" height="8" viewBox="0 0 9 8"><ellipse cx="4" cy="4.6" rx="3.5" ry="2.8" fill="#d2d2d2"/><path d="M4.5 2.5 L7.5 0.8 L7.5 7 L4.5 6 Z" fill="#d2d2d2"/></svg>
<svg class="ab" style="left:139px;top:136px" width="9" height="9" viewBox="0 0 9 9"><rect x="0" y="0" width="9" height="9" rx="2" fill="#cbcbcb"/><path d="M2.9 3.2 Q2.9 1.4 4.6 1.4 Q6.3 1.4 6.3 3 Q6.3 4 5.2 4.6 Q4.6 5 4.6 5.9" fill="none" stroke="#e4e4e4" stroke-width="1.35"/><rect x="3.9" y="6.6" width="1.4" height="1.4" fill="#e4e4e4"/></svg>
<div class="t" style="left:150px;top:136.0px;font-size:8.4px;letter-spacing:-0.4px;color:#a9a9a9">Oddfire phasing</div>
<div class="ab" style="left:284px;top:133px;width:74.50px;height:14px;background:#eeeeee;border:1px solid #a4bad4;border-right:none"></div>
<div class="ab" style="left:358.50px;top:133px;width:12.5px;height:14px;background:#eeeeee;border:1px solid #c8c8c8"></div>
<div class="ab" style="left:358.50px;top:133px;width:1px;height:14px;background:#a4bad4"></div>
<svg class="ab" style="left:361.25px;top:138.00px" width="7" height="4" viewBox="0 0 7 4"><path d="M0.3 0.2 H6.7 L3.5 3.8 Z" fill="#a9c2de"/></svg>
<div class="t" style="left:286px;top:135.9px;font-size:8.5px;letter-spacing:-0.35px;color:#a8c0dc">Alternate</div>
<svg class="ab" style="left:129px;top:150px" width="9" height="8" viewBox="0 0 9 8"><ellipse cx="4" cy="5" rx="4" ry="3" fill="#cfe6f6"/><ellipse cx="3.7" cy="4.7" rx="2.9" ry="2" fill="#fbfdff"/><path d="M4.2 4.6 L6.8 1.7" stroke="#e6b060" stroke-width="1.05"/><path d="M6.7 1.8 L7.7 0.6" stroke="#ea8ca4" stroke-width="1.1"/></svg>
<svg class="ab" style="left:139px;top:150px" width="9" height="9" viewBox="0 0 9 9"><rect x="0" y="0" width="9" height="9" rx="2" fill="#0a55b0"/><path d="M2.9 3.2 Q2.9 1.4 4.6 1.4 Q6.3 1.4 6.3 3 Q6.3 4 5.2 4.6 Q4.6 5 4.6 5.9" fill="none" stroke="#ffffff" stroke-width="1.35"/><rect x="3.9" y="6.6" width="1.4" height="1.4" fill="#ffffff"/></svg>
<div class="t" style="left:150px;top:150.5px;font-size:8.4px;letter-spacing:-0.4px;color:#383838">Skip Pulses</div>
<div class="ab" style="left:324.75px;top:148px;width:37.75px;height:12px;background:#fff;border-top:1.5px solid #7a7a7a;border-left:1.5px solid #7a7a7a;border-bottom:1px solid #e4e4e4;border-right:1px solid #e4e4e4"></div>
<div class="ab" style="left:362.50px;top:148px;width:8.50px;height:6.00px;background:linear-gradient(#f4f8fc,#c9d9ea);border:1px solid #7f98b6"></div>
<div class="ab" style="left:362.50px;top:154.00px;width:8.50px;height:6.00px;background:linear-gradient(#f4f8fc,#c9d9ea);border:1px solid #7f98b6"></div>
<svg class="ab" style="left:364.25px;top:149.50px" width="5" height="3" viewBox="0 0 5 3"><path d="M1 2.6 H4 L2.5 0.6 Z" fill="#111"/></svg>
<svg class="ab" style="left:364.25px;top:155.50px" width="5" height="3" viewBox="0 0 5 3"><path d="M1 0.4 H4 L2.5 2.4 Z" fill="#111"/></svg>
<div class="t" style="left:326.25px;top:150.3px;font-size:8.6px;letter-spacing:-0.3px;color:#383838">3</div>
<svg class="ab" style="left:129px;top:164px" width="9" height="8" viewBox="0 0 9 8"><ellipse cx="4" cy="5" rx="4" ry="3" fill="#cfe6f6"/><ellipse cx="3.7" cy="4.7" rx="2.9" ry="2" fill="#fbfdff"/><path d="M4.2 4.6 L6.8 1.7" stroke="#e6b060" stroke-width="1.05"/><path d="M6.7 1.8 L7.7 0.6" stroke="#ea8ca4" stroke-width="1.1"/></svg>
<svg class="ab" style="left:139px;top:164px" width="9" height="9" viewBox="0 0 9 9"><rect x="0" y="0" width="9" height="9" rx="2" fill="#0a55b0"/><path d="M2.9 3.2 Q2.9 1.4 4.6 1.4 Q6.3 1.4 6.3 3 Q6.3 4 5.2 4.6 Q4.6 5 4.6 5.9" fill="none" stroke="#ffffff" stroke-width="1.35"/><rect x="3.9" y="6.6" width="1.4" height="1.4" fill="#ffffff"/></svg>
<div class="t" style="left:150px;top:165.0px;font-size:8.4px;letter-spacing:-0.4px;color:#383838">Ignition Input Capture</div>
<div class="ab" style="left:284px;top:162px;width:74.50px;height:14px;background:#eeeeee;border:1px solid #8aa6c6;border-right:none"></div>
<div class="ab" style="left:358.50px;top:162px;width:12.5px;height:14px;background:linear-gradient(#f6f9fc,#dfe8f2 50%,#c6d7ea);border:1px solid #8aa6c6"></div>
<svg class="ab" style="left:361.25px;top:167.00px" width="7" height="4" viewBox="0 0 7 4"><path d="M0.3 0.2 H6.7 L3.5 3.8 Z" fill="#111"/></svg>
<div class="t" style="left:286px;top:164.9px;font-size:8.5px;letter-spacing:-0.35px;color:#383838">Rising Edge</div>
<svg class="ab" style="left:129px;top:180px" width="9" height="8" viewBox="0 0 9 8"><ellipse cx="4" cy="5" rx="4" ry="3" fill="#cfe6f6"/><ellipse cx="3.7" cy="4.7" rx="2.9" ry="2" fill="#fbfdff"/><path d="M4.2 4.6 L6.8 1.7" stroke="#e6b060" stroke-width="1.05"/><path d="M6.7 1.8 L7.7 0.6" stroke="#ea8ca4" stroke-width="1.1"/></svg>
<svg class="ab" style="left:139px;top:180px" width="9" height="9" viewBox="0 0 9 9"><rect x="0" y="0" width="9" height="9" rx="2" fill="#0a55b0"/><path d="M2.9 3.2 Q2.9 1.4 4.6 1.4 Q6.3 1.4 6.3 3 Q6.3 4 5.2 4.6 Q4.6 5 4.6 5.9" fill="none" stroke="#ffffff" stroke-width="1.35"/><rect x="3.9" y="6.6" width="1.4" height="1.4" fill="#ffffff"/></svg>
<div class="t" style="left:150px;top:180.0px;font-size:8.4px;letter-spacing:-0.4px;color:#383838">Spark Output</div>
<div class="ab" style="left:284px;top:177px;width:74.50px;height:14px;background:#eeeeee;border:1px solid #8aa6c6;border-right:none"></div>
<div class="ab" style="left:358.50px;top:177px;width:12.5px;height:14px;background:linear-gradient(#f6f9fc,#dfe8f2 50%,#c6d7ea);border:1px solid #8aa6c6"></div>
<svg class="ab" style="left:361.25px;top:182.00px" width="7" height="4" viewBox="0 0 7 4"><path d="M0.3 0.2 H6.7 L3.5 3.8 Z" fill="#111"/></svg>
<div class="t" style="left:286px;top:179.9px;font-size:8.5px;letter-spacing:-0.35px;color:#383838">Going High</div>
<svg class="ab" style="left:129px;top:194px" width="9" height="8" viewBox="0 0 9 8"><ellipse cx="4" cy="5" rx="4" ry="3" fill="#cfe6f6"/><ellipse cx="3.7" cy="4.7" rx="2.9" ry="2" fill="#fbfdff"/><path d="M4.2 4.6 L6.8 1.7" stroke="#e6b060" stroke-width="1.05"/><path d="M6.7 1.8 L7.7 0.6" stroke="#ea8ca4" stroke-width="1.1"/></svg>
<svg class="ab" style="left:139px;top:194px" width="9" height="9" viewBox="0 0 9 9"><rect x="0" y="0" width="9" height="9" rx="2" fill="#0a55b0"/><path d="M2.9 3.2 Q2.9 1.4 4.6 1.4 Q6.3 1.4 6.3 3 Q6.3 4 5.2 4.6 Q4.6 5 4.6 5.9" fill="none" stroke="#ffffff" stroke-width="1.35"/><rect x="3.9" y="6.6" width="1.4" height="1.4" fill="#ffffff"/></svg>
<div class="t" style="left:150px;top:195.0px;font-size:8.4px;letter-spacing:-0.4px;color:#383838">Number of coils</div>
<div class="ab" style="left:284px;top:192px;width:74.50px;height:14px;background:#eeeeee;border:1px solid #8aa6c6;border-right:none"></div>
<div class="ab" style="left:358.50px;top:192px;width:12.5px;height:14px;background:linear-gradient(#f6f9fc,#dfe8f2 50%,#c6d7ea);border:1px solid #8aa6c6"></div>
<svg class="ab" style="left:361.25px;top:197.00px" width="7" height="4" viewBox="0 0 7 4"><path d="M0.3 0.2 H6.7 L3.5 3.8 Z" fill="#111"/></svg>
<div class="t" style="left:286px;top:194.9px;font-size:8.5px;letter-spacing:-0.35px;color:#383838">Wasted spark</div>
<svg class="ab" style="left:129px;top:210px" width="9" height="8" viewBox="0 0 9 8"><ellipse cx="4" cy="5" rx="4" ry="3" fill="#cfe6f6"/><ellipse cx="3.7" cy="4.7" rx="2.9" ry="2" fill="#fbfdff"/><path d="M4.2 4.6 L6.8 1.7" stroke="#e6b060" stroke-width="1.05"/><path d="M6.7 1.8 L7.7 0.6" stroke="#ea8ca4" stroke-width="1.1"/></svg>
<svg class="ab" style="left:139px;top:210px" width="9" height="9" viewBox="0 0 9 9"><rect x="0" y="0" width="9" height="9" rx="2" fill="#0a55b0"/><path d="M2.9 3.2 Q2.9 1.4 4.6 1.4 Q6.3 1.4 6.3 3 Q6.3 4 5.2 4.6 Q4.6 5 4.6 5.9" fill="none" stroke="#ffffff" stroke-width="1.35"/><rect x="3.9" y="6.6" width="1.4" height="1.4" fill="#ffffff"/></svg>
<div class="t" style="left:150px;top:210.0px;font-size:8.4px;letter-spacing:-0.4px;color:#383838">Spark hardware in use</div>
<div class="ab" style="left:284px;top:207px;width:74.50px;height:14px;background:#eeeeee;border:1px solid #8aa6c6;border-right:none"></div>
<div class="ab" style="left:358.50px;top:207px;width:12.5px;height:14px;background:linear-gradient(#f6f9fc,#dfe8f2 50%,#c6d7ea);border:1px solid #8aa6c6"></div>
<svg class="ab" style="left:361.25px;top:212.00px" width="7" height="4" viewBox="0 0 7 4"><path d="M0.3 0.2 H6.7 L3.5 3.8 Z" fill="#111"/></svg>
<div class="t" style="left:286px;top:209.9px;font-size:8.5px;letter-spacing:-0.35px;color:#383838">MS3X spark</div>
<svg class="ab" style="left:129px;top:224px" width="9" height="8" viewBox="0 0 9 8"><ellipse cx="4" cy="5" rx="4" ry="3" fill="#cfe6f6"/><ellipse cx="3.7" cy="4.7" rx="2.9" ry="2" fill="#fbfdff"/><path d="M4.2 4.6 L6.8 1.7" stroke="#e6b060" stroke-width="1.05"/><path d="M6.7 1.8 L7.7 0.6" stroke="#ea8ca4" stroke-width="1.1"/></svg>
<svg class="ab" style="left:139px;top:224px" width="9" height="9" viewBox="0 0 9 9"><rect x="0" y="0" width="9" height="9" rx="2" fill="#0a55b0"/><path d="M2.9 3.2 Q2.9 1.4 4.6 1.4 Q6.3 1.4 6.3 3 Q6.3 4 5.2 4.6 Q4.6 5 4.6 5.9" fill="none" stroke="#ffffff" stroke-width="1.35"/><rect x="3.9" y="6.6" width="1.4" height="1.4" fill="#ffffff"/></svg>
<div class="t" style="left:150px;top:225.0px;font-size:8.4px;letter-spacing:-0.4px;color:#383838">Cam input (if used)</div>
<div class="ab" style="left:284px;top:222px;width:74.50px;height:14px;background:#eeeeee;border:1px solid #8aa6c6;border-right:none"></div>
<div class="ab" style="left:358.50px;top:222px;width:12.5px;height:14px;background:linear-gradient(#f6f9fc,#dfe8f2 50%,#c6d7ea);border:1px solid #8aa6c6"></div>
<svg class="ab" style="left:361.25px;top:227.00px" width="7" height="4" viewBox="0 0 7 4"><path d="M0.3 0.2 H6.7 L3.5 3.8 Z" fill="#111"/></svg>
<div class="t" style="left:286px;top:224.9px;font-size:8.5px;letter-spacing:-0.35px;color:#383838">MS3X Cam in</div>
<svg class="ab" style="left:129px;top:240px" width="9" height="8" viewBox="0 0 9 8"><ellipse cx="4" cy="4.6" rx="3.5" ry="2.8" fill="#d2d2d2"/><path d="M4.5 2.5 L7.5 0.8 L7.5 7 L4.5 6 Z" fill="#d2d2d2"/></svg>
<svg class="ab" style="left:139px;top:240px" width="9" height="9" viewBox="0 0 9 9"><rect x="0" y="0" width="9" height="9" rx="2" fill="#cbcbcb"/><path d="M2.9 3.2 Q2.9 1.4 4.6 1.4 Q6.3 1.4 6.3 3 Q6.3 4 5.2 4.6 Q4.6 5 4.6 5.9" fill="none" stroke="#e4e4e4" stroke-width="1.35"/><rect x="3.9" y="6.6" width="1.4" height="1.4" fill="#e4e4e4"/></svg>
<div class="t" style="left:150px;top:240.0px;font-size:8.4px;letter-spacing:-0.4px;color:#a9a9a9">Tertiary tach input</div>
<div class="ab" style="left:284px;top:237px;width:74.50px;height:14px;background:#eeeeee;border:1px solid #a4bad4;border-right:none"></div>
<div class="ab" style="left:358.50px;top:237px;width:12.5px;height:14px;background:#eeeeee;border:1px solid #c8c8c8"></div>
<div class="ab" style="left:358.50px;top:237px;width:1px;height:14px;background:#a4bad4"></div>
<svg class="ab" style="left:361.25px;top:242.00px" width="7" height="4" viewBox="0 0 7 4"><path d="M0.3 0.2 H6.7 L3.5 3.8 Z" fill="#a9c2de"/></svg>
<div class="t" style="left:286px;top:239.9px;font-size:8.5px;letter-spacing:-0.35px;color:#a8c0dc">MS3X Cam</div>
<svg class="ab" style="left:129px;top:254px" width="9" height="8" viewBox="0 0 9 8"><ellipse cx="4" cy="4.6" rx="3.5" ry="2.8" fill="#d2d2d2"/><path d="M4.5 2.5 L7.5 0.8 L7.5 7 L4.5 6 Z" fill="#d2d2d2"/></svg>
<svg class="ab" style="left:139px;top:254px" width="9" height="9" viewBox="0 0 9 9"><rect x="0" y="0" width="9" height="9" rx="2" fill="#cbcbcb"/><path d="M2.9 3.2 Q2.9 1.4 4.6 1.4 Q6.3 1.4 6.3 3 Q6.3 4 5.2 4.6 Q4.6 5 4.6 5.9" fill="none" stroke="#e4e4e4" stroke-width="1.35"/><rect x="3.9" y="6.6" width="1.4" height="1.4" fill="#e4e4e4"/></svg>
<div class="t" style="left:150px;top:255.0px;font-size:8.4px;letter-spacing:-0.4px;color:#a9a9a9">Flip polarity on hi-res tach</div>
<div class="ab" style="left:284px;top:252px;width:74.50px;height:14px;background:#eeeeee;border:1px solid #a4bad4;border-right:none"></div>
<div class="ab" style="left:358.50px;top:252px;width:12.5px;height:14px;background:#eeeeee;border:1px solid #c8c8c8"></div>
<div class="ab" style="left:358.50px;top:252px;width:1px;height:14px;background:#a4bad4"></div>
<svg class="ab" style="left:361.25px;top:257.00px" width="7" height="4" viewBox="0 0 7 4"><path d="M0.3 0.2 H6.7 L3.5 3.8 Z" fill="#a9c2de"/></svg>
<div class="t" style="left:286px;top:254.9px;font-size:8.5px;letter-spacing:-0.35px;color:#a8c0dc">Normal</div>
<svg class="ab" style="left:129px;top:270px" width="9" height="8" viewBox="0 0 9 8"><ellipse cx="4" cy="4.6" rx="3.5" ry="2.8" fill="#d2d2d2"/><path d="M4.5 2.5 L7.5 0.8 L7.5 7 L4.5 6 Z" fill="#d2d2d2"/></svg>
<svg class="ab" style="left:139px;top:270px" width="9" height="9" viewBox="0 0 9 9"><rect x="0" y="0" width="9" height="9" rx="2" fill="#cbcbcb"/><path d="M2.9 3.2 Q2.9 1.4 4.6 1.4 Q6.3 1.4 6.3 3 Q6.3 4 5.2 4.6 Q4.6 5 4.6 5.9" fill="none" stroke="#e4e4e4" stroke-width="1.35"/><rect x="3.9" y="6.6" width="1.4" height="1.4" fill="#e4e4e4"/></svg>
<div class="t" style="left:150px;top:270.0px;font-size:8.4px;letter-spacing:-0.4px;color:#a9a9a9">Trigger wheel arrangement</div>
<div class="ab" style="left:245px;top:267px;width:113.50px;height:14px;background:#eeeeee;border:1px solid #a4bad4;border-right:none"></div>
<div class="ab" style="left:358.50px;top:267px;width:12.5px;height:14px;background:#eeeeee;border:1px solid #c8c8c8"></div>
<div class="ab" style="left:358.50px;top:267px;width:1px;height:14px;background:#a4bad4"></div>
<svg class="ab" style="left:361.25px;top:272.00px" width="7" height="4" viewBox="0 0 7 4"><path d="M0.3 0.2 H6.7 L3.5 3.8 Z" fill="#a9c2de"/></svg>
<div class="t" style="left:247px;top:269.9px;font-size:8.5px;letter-spacing:-0.35px;color:#a8c0dc">Single wheel with missing tooth</div>
<svg class="ab" style="left:129px;top:284px" width="9" height="8" viewBox="0 0 9 8"><ellipse cx="4" cy="4.6" rx="3.5" ry="2.8" fill="#d2d2d2"/><path d="M4.5 2.5 L7.5 0.8 L7.5 7 L4.5 6 Z" fill="#d2d2d2"/></svg>
<svg class="ab" style="left:139px;top:284px" width="9" height="9" viewBox="0 0 9 9"><rect x="0" y="0" width="9" height="9" rx="2" fill="#cbcbcb"/><path d="M2.9 3.2 Q2.9 1.4 4.6 1.4 Q6.3 1.4 6.3 3 Q6.3 4 5.2 4.6 Q4.6 5 4.6 5.9" fill="none" stroke="#e4e4e4" stroke-width="1.35"/><rect x="3.9" y="6.6" width="1.4" height="1.4" fill="#e4e4e4"/></svg>
<div class="t" style="left:150px;top:284.5px;font-size:8.4px;letter-spacing:-0.4px;color:#a9a9a9">Trigger Wheel Teeth(teeth)</div>
<div class="ab" style="left:324.75px;top:282px;width:37.75px;height:12px;background:#fff;border-top:1.5px solid #9a9a9a;border-left:1.5px solid #9a9a9a;border-bottom:1px solid #e4e4e4;border-right:1px solid #e4e4e4"></div>
<div class="ab" style="left:362.50px;top:282px;width:8.50px;height:6.00px;background:#eeeeee;border:1px solid #b8b8b8"></div>
<div class="ab" style="left:362.50px;top:288.00px;width:8.50px;height:6.00px;background:#eeeeee;border:1px solid #b8b8b8"></div>
<svg class="ab" style="left:364.25px;top:283.50px" width="5" height="3" viewBox="0 0 5 3"><path d="M1 2.6 H4 L2.5 0.6 Z" fill="#9a9a9a"/></svg>
<svg class="ab" style="left:364.25px;top:289.50px" width="5" height="3" viewBox="0 0 5 3"><path d="M1 0.4 H4 L2.5 2.4 Z" fill="#9a9a9a"/></svg>
<div class="t" style="left:326.25px;top:284.3px;font-size:8.6px;letter-spacing:-0.3px;color:#a8c0dc">36</div>
<svg class="ab" style="left:129px;top:298px" width="9" height="8" viewBox="0 0 9 8"><ellipse cx="4" cy="4.6" rx="3.5" ry="2.8" fill="#d2d2d2"/><path d="M4.5 2.5 L7.5 0.8 L7.5 7 L4.5 6 Z" fill="#d2d2d2"/></svg>
<svg class="ab" style="left:139px;top:298px" width="9" height="9" viewBox="0 0 9 9"><rect x="0" y="0" width="9" height="9" rx="2" fill="#cbcbcb"/><path d="M2.9 3.2 Q2.9 1.4 4.6 1.4 Q6.3 1.4 6.3 3 Q6.3 4 5.2 4.6 Q4.6 5 4.6 5.9" fill="none" stroke="#e4e4e4" stroke-width="1.35"/><rect x="3.9" y="6.6" width="1.4" height="1.4" fill="#e4e4e4"/></svg>
<div class="t" style="left:150px;top:298.5px;font-size:8.4px;letter-spacing:-0.4px;color:#a9a9a9">Missing Teeth(teeth)</div>
<div class="ab" style="left:324.75px;top:296px;width:37.75px;height:12px;background:#fff;border-top:1.5px solid #9a9a9a;border-left:1.5px solid #9a9a9a;border-bottom:1px solid #e4e4e4;border-right:1px solid #e4e4e4"></div>
<div class="ab" style="left:362.50px;top:296px;width:8.50px;height:6.00px;background:#eeeeee;border:1px solid #b8b8b8"></div>
<div class="ab" style="left:362.50px;top:302.00px;width:8.50px;height:6.00px;background:#eeeeee;border:1px solid #b8b8b8"></div>
<svg class="ab" style="left:364.25px;top:297.50px" width="5" height="3" viewBox="0 0 5 3"><path d="M1 2.6 H4 L2.5 0.6 Z" fill="#9a9a9a"/></svg>
<svg class="ab" style="left:364.25px;top:303.50px" width="5" height="3" viewBox="0 0 5 3"><path d="M1 0.4 H4 L2.5 2.4 Z" fill="#9a9a9a"/></svg>
<div class="t" style="left:326.25px;top:298.3px;font-size:8.6px;letter-spacing:-0.3px;color:#a8c0dc">1</div>
<svg class="ab" style="left:129px;top:312px" width="9" height="8" viewBox="0 0 9 8"><ellipse cx="4" cy="4.6" rx="3.5" ry="2.8" fill="#d2d2d2"/><path d="M4.5 2.5 L7.5 0.8 L7.5 7 L4.5 6 Z" fill="#d2d2d2"/></svg>
<svg class="ab" style="left:139px;top:312px" width="9" height="9" viewBox="0 0 9 9"><rect x="0" y="0" width="9" height="9" rx="2" fill="#cbcbcb"/><path d="M2.9 3.2 Q2.9 1.4 4.6 1.4 Q6.3 1.4 6.3 3 Q6.3 4 5.2 4.6 Q4.6 5 4.6 5.9" fill="none" stroke="#e4e4e4" stroke-width="1.35"/><rect x="3.9" y="6.6" width="1.4" height="1.4" fill="#e4e4e4"/></svg>
<div class="t" style="left:150px;top:312.5px;font-size:8.4px;letter-spacing:-0.4px;color:#a9a9a9">Tooth #1 Angle(deg BTDC)</div>
<div class="ab" style="left:324.75px;top:310px;width:37.75px;height:12px;background:#fff;border-top:1.5px solid #9a9a9a;border-left:1.5px solid #9a9a9a;border-bottom:1px solid #e4e4e4;border-right:1px solid #e4e4e4"></div>
<div class="ab" style="left:362.50px;top:310px;width:8.50px;height:6.00px;background:#eeeeee;border:1px solid #b8b8b8"></div>
<div class="ab" style="left:362.50px;top:316.00px;width:8.50px;height:6.00px;background:#eeeeee;border:1px solid #b8b8b8"></div>
<svg class="ab" style="left:364.25px;top:311.50px" width="5" height="3" viewBox="0 0 5 3"><path d="M1 2.6 H4 L2.5 0.6 Z" fill="#9a9a9a"/></svg>
<svg class="ab" style="left:364.25px;top:317.50px" width="5" height="3" viewBox="0 0 5 3"><path d="M1 0.4 H4 L2.5 2.4 Z" fill="#9a9a9a"/></svg>
<div class="t" style="left:326.25px;top:312.3px;font-size:8.6px;letter-spacing:-0.3px;color:#a8c0dc">0.0</div>
<svg class="ab" style="left:129px;top:326px" width="9" height="8" viewBox="0 0 9 8"><ellipse cx="4" cy="4.6" rx="3.5" ry="2.8" fill="#d2d2d2"/><path d="M4.5 2.5 L7.5 0.8 L7.5 7 L4.5 6 Z" fill="#d2d2d2"/></svg>
<svg class="ab" style="left:139px;top:326px" width="9" height="9" viewBox="0 0 9 9"><rect x="0" y="0" width="9" height="9" rx="2" fill="#cbcbcb"/><path d="M2.9 3.2 Q2.9 1.4 4.6 1.4 Q6.3 1.4 6.3 3 Q6.3 4 5.2 4.6 Q4.6 5 4.6 5.9" fill="none" stroke="#e4e4e4" stroke-width="1.35"/><rect x="3.9" y="6.6" width="1.4" height="1.4" fill="#e4e4e4"/></svg>
<div class="t" style="left:150px;top:326.0px;font-size:8.4px;letter-spacing:-0.4px;color:#a9a9a9">Main wheel speed</div>
<div class="ab" style="left:284px;top:323px;width:74.50px;height:14px;background:#eeeeee;border:1px solid #a4bad4;border-right:none"></div>
<div class="ab" style="left:358.50px;top:323px;width:12.5px;height:14px;background:#eeeeee;border:1px solid #c8c8c8"></div>
<div class="ab" style="left:358.50px;top:323px;width:1px;height:14px;background:#a4bad4"></div>
<svg class="ab" style="left:361.25px;top:328.00px" width="7" height="4" viewBox="0 0 7 4"><path d="M0.3 0.2 H6.7 L3.5 3.8 Z" fill="#a9c2de"/></svg>
<div class="t" style="left:286px;top:325.9px;font-size:8.5px;letter-spacing:-0.35px;color:#a8c0dc">Crank wheel</div>
<svg class="ab" style="left:129px;top:340px" width="9" height="8" viewBox="0 0 9 8"><ellipse cx="4" cy="4.6" rx="3.5" ry="2.8" fill="#d2d2d2"/><path d="M4.5 2.5 L7.5 0.8 L7.5 7 L4.5 6 Z" fill="#d2d2d2"/></svg>
<svg class="ab" style="left:139px;top:340px" width="9" height="9" viewBox="0 0 9 9"><rect x="0" y="0" width="9" height="9" rx="2" fill="#cbcbcb"/><path d="M2.9 3.2 Q2.9 1.4 4.6 1.4 Q6.3 1.4 6.3 3 Q6.3 4 5.2 4.6 Q4.6 5 4.6 5.9" fill="none" stroke="#e4e4e4" stroke-width="1.35"/><rect x="3.9" y="6.6" width="1.4" height="1.4" fill="#e4e4e4"/></svg>
<div class="t" style="left:150px;top:341.0px;font-size:8.4px;letter-spacing:-0.4px;color:#a9a9a9">Second trigger active on</div>
<div class="ab" style="left:284px;top:338px;width:74.50px;height:14px;background:#eeeeee;border:1px solid #a4bad4;border-right:none"></div>
<div class="ab" style="left:358.50px;top:338px;width:12.5px;height:14px;background:#eeeeee;border:1px solid #c8c8c8"></div>
<div class="ab" style="left:358.50px;top:338px;width:1px;height:14px;background:#a4bad4"></div>
<svg class="ab" style="left:361.25px;top:343.00px" width="7" height="4" viewBox="0 0 7 4"><path d="M0.3 0.2 H6.7 L3.5 3.8 Z" fill="#a9c2de"/></svg>
<div class="t" style="left:286px;top:340.9px;font-size:8.5px;letter-spacing:-0.35px;color:#a8c0dc">Rising edge</div>
<svg class="ab" style="left:129px;top:356px" width="9" height="8" viewBox="0 0 9 8"><ellipse cx="4" cy="4.6" rx="3.5" ry="2.8" fill="#d2d2d2"/><path d="M4.5 2.5 L7.5 0.8 L7.5 7 L4.5 6 Z" fill="#d2d2d2"/></svg>
<svg class="ab" style="left:139px;top:356px" width="9" height="9" viewBox="0 0 9 9"><rect x="0" y="0" width="9" height="9" rx="2" fill="#cbcbcb"/><path d="M2.9 3.2 Q2.9 1.4 4.6 1.4 Q6.3 1.4 6.3 3 Q6.3 4 5.2 4.6 Q4.6 5 4.6 5.9" fill="none" stroke="#e4e4e4" stroke-width="1.35"/><rect x="3.9" y="6.6" width="1.4" height="1.4" fill="#e4e4e4"/></svg>
<div class="t" style="left:150px;top:356.0px;font-size:8.4px;letter-spacing:-0.4px;color:#a9a9a9">Level for phase 1</div>
<div class="ab" style="left:284px;top:353px;width:74.50px;height:14px;background:#eeeeee;border:1px solid #a4bad4;border-right:none"></div>
<div class="ab" style="left:358.50px;top:353px;width:12.5px;height:14px;background:#eeeeee;border:1px solid #c8c8c8"></div>
<div class="ab" style="left:358.50px;top:353px;width:1px;height:14px;background:#a4bad4"></div>
<svg class="ab" style="left:361.25px;top:358.00px" width="7" height="4" viewBox="0 0 7 4"><path d="M0.3 0.2 H6.7 L3.5 3.8 Z" fill="#a9c2de"/></svg>
<div class="t" style="left:286px;top:355.9px;font-size:8.5px;letter-spacing:-0.35px;color:#a8c0dc">Low</div>
<svg class="ab" style="left:129px;top:370px" width="9" height="8" viewBox="0 0 9 8"><ellipse cx="4" cy="4.6" rx="3.5" ry="2.8" fill="#d2d2d2"/><path d="M4.5 2.5 L7.5 0.8 L7.5 7 L4.5 6 Z" fill="#d2d2d2"/></svg>
<svg class="ab" style="left:139px;top:370px" width="9" height="9" viewBox="0 0 9 9"><rect x="0" y="0" width="9" height="9" rx="2" fill="#cbcbcb"/><path d="M2.9 3.2 Q2.9 1.4 4.6 1.4 Q6.3 1.4 6.3 3 Q6.3 4 5.2 4.6 Q4.6 5 4.6 5.9" fill="none" stroke="#e4e4e4" stroke-width="1.35"/><rect x="3.9" y="6.6" width="1.4" height="1.4" fill="#e4e4e4"/></svg>
<div class="t" style="left:150px;top:371.0px;font-size:8.4px;letter-spacing:-0.4px;color:#a9a9a9">and every rotation of..</div>
<div class="ab" style="left:284px;top:368px;width:74.50px;height:14px;background:#eeeeee;border:1px solid #a4bad4;border-right:none"></div>
<div class="ab" style="left:358.50px;top:368px;width:12.5px;height:14px;background:#eeeeee;border:1px solid #c8c8c8"></div>
<div class="ab" style="left:358.50px;top:368px;width:1px;height:14px;background:#a4bad4"></div>
<svg class="ab" style="left:361.25px;top:373.00px" width="7" height="4" viewBox="0 0 7 4"><path d="M0.3 0.2 H6.7 L3.5 3.8 Z" fill="#a9c2de"/></svg>
<div class="t" style="left:286px;top:370.9px;font-size:8.5px;letter-spacing:-0.35px;color:#a8c0dc">Cam</div>
<svg class="ab" style="left:380px;top:50px" width="9" height="8" viewBox="0 0 9 8"><ellipse cx="4" cy="5" rx="4" ry="3" fill="#cfe6f6"/><ellipse cx="3.7" cy="4.7" rx="2.9" ry="2" fill="#fbfdff"/><path d="M4.2 4.6 L6.8 1.7" stroke="#e6b060" stroke-width="1.05"/><path d="M6.7 1.8 L7.7 0.6" stroke="#ea8ca4" stroke-width="1.1"/></svg>
<svg class="ab" style="left:390px;top:50px" width="9" height="9" viewBox="0 0 9 9"><rect x="0" y="0" width="9" height="9" rx="2" fill="#0a55b0"/><path d="M2.9 3.2 Q2.9 1.4 4.6 1.4 Q6.3 1.4 6.3 3 Q6.3 4 5.2 4.6 Q4.6 5 4.6 5.9" fill="none" stroke="#ffffff" stroke-width="1.35"/><rect x="3.9" y="6.6" width="1.4" height="1.4" fill="#ffffff"/></svg>
<div class="t" style="left:401px;top:50.0px;font-size:8.4px;letter-spacing:-0.4px;color:#383838">Fixed Advance</div>
<div class="ab" style="left:484.2px;top:47px;width:75.00px;height:14px;background:#eeeeee;border:1px solid #8aa6c6;border-right:none"></div>
<div class="ab" style="left:559.20px;top:47px;width:12.5px;height:14px;background:linear-gradient(#f6f9fc,#dfe8f2 50%,#c6d7ea);border:1px solid #8aa6c6"></div>
<svg class="ab" style="left:561.95px;top:52.00px" width="7" height="4" viewBox="0 0 7 4"><path d="M0.3 0.2 H6.7 L3.5 3.8 Z" fill="#111"/></svg>
<div class="t" style="left:486.2px;top:49.9px;font-size:8.5px;letter-spacing:-0.35px;color:#383838">Use Table</div>
<svg class="ab" style="left:380px;top:64px" width="9" height="8" viewBox="0 0 9 8"><ellipse cx="4" cy="5" rx="4" ry="3" fill="#cfe6f6"/><ellipse cx="3.7" cy="4.7" rx="2.9" ry="2" fill="#fbfdff"/><path d="M4.2 4.6 L6.8 1.7" stroke="#e6b060" stroke-width="1.05"/><path d="M6.7 1.8 L7.7 0.6" stroke="#ea8ca4" stroke-width="1.1"/></svg>
<svg class="ab" style="left:390px;top:64px" width="9" height="9" viewBox="0 0 9 9"><rect x="0" y="0" width="9" height="9" rx="2" fill="#0a55b0"/><path d="M2.9 3.2 Q2.9 1.4 4.6 1.4 Q6.3 1.4 6.3 3 Q6.3 4 5.2 4.6 Q4.6 5 4.6 5.9" fill="none" stroke="#ffffff" stroke-width="1.35"/><rect x="3.9" y="6.6" width="1.4" height="1.4" fill="#ffffff"/></svg>
<div class="t" style="left:401px;top:65.0px;font-size:8.4px;letter-spacing:-0.4px;color:#383838">Use Prediction</div>
<div class="ab" style="left:484.2px;top:62px;width:75.00px;height:14px;background:#eeeeee;border:1px solid #8aa6c6;border-right:none"></div>
<div class="ab" style="left:559.20px;top:62px;width:12.5px;height:14px;background:linear-gradient(#f6f9fc,#dfe8f2 50%,#c6d7ea);border:1px solid #8aa6c6"></div>
<svg class="ab" style="left:561.95px;top:67.00px" width="7" height="4" viewBox="0 0 7 4"><path d="M0.3 0.2 H6.7 L3.5 3.8 Z" fill="#111"/></svg>
<div class="t" style="left:486.2px;top:64.9px;font-size:8.5px;letter-spacing:-0.35px;color:#383838">1st Deriv Prediction</div>
<svg class="ab" style="left:380px;top:79px" width="9" height="8" viewBox="0 0 9 8"><ellipse cx="4" cy="4.6" rx="3.5" ry="2.8" fill="#d2d2d2"/><path d="M4.5 2.5 L7.5 0.8 L7.5 7 L4.5 6 Z" fill="#d2d2d2"/></svg>
<svg class="ab" style="left:390px;top:79px" width="9" height="9" viewBox="0 0 9 9"><rect x="0" y="0" width="9" height="9" rx="2" fill="#cbcbcb"/><path d="M2.9 3.2 Q2.9 1.4 4.6 1.4 Q6.3 1.4 6.3 3 Q6.3 4 5.2 4.6 Q4.6 5 4.6 5.9" fill="none" stroke="#e4e4e4" stroke-width="1.35"/><rect x="3.9" y="6.6" width="1.4" height="1.4" fill="#e4e4e4"/></svg>
<div class="t" style="left:401px;top:79.5px;font-size:8.4px;letter-spacing:-0.4px;color:#a9a9a9">Timing for Fixed Advance(degrees)</div>
<div class="ab" style="left:525px;top:77px;width:37.50px;height:12px;background:#fff;border-top:1.5px solid #9a9a9a;border-left:1.5px solid #9a9a9a;border-bottom:1px solid #e4e4e4;border-right:1px solid #e4e4e4"></div>
<div class="ab" style="left:562.50px;top:77px;width:9.20px;height:6.00px;background:#eeeeee;border:1px solid #b8b8b8"></div>
<div class="ab" style="left:562.50px;top:83.00px;width:9.20px;height:6.00px;background:#eeeeee;border:1px solid #b8b8b8"></div>
<svg class="ab" style="left:564.60px;top:78.50px" width="5" height="3" viewBox="0 0 5 3"><path d="M1 2.6 H4 L2.5 0.6 Z" fill="#9a9a9a"/></svg>
<svg class="ab" style="left:564.60px;top:84.50px" width="5" height="3" viewBox="0 0 5 3"><path d="M1 0.4 H4 L2.5 2.4 Z" fill="#9a9a9a"/></svg>
<div class="t" style="left:526.5px;top:79.3px;font-size:8.6px;letter-spacing:-0.3px;color:#a8c0dc">10.0</div>
<svg class="ab" style="left:380px;top:93px" width="9" height="8" viewBox="0 0 9 8"><ellipse cx="4" cy="5" rx="4" ry="3" fill="#cfe6f6"/><ellipse cx="3.7" cy="4.7" rx="2.9" ry="2" fill="#fbfdff"/><path d="M4.2 4.6 L6.8 1.7" stroke="#e6b060" stroke-width="1.05"/><path d="M6.7 1.8 L7.7 0.6" stroke="#ea8ca4" stroke-width="1.1"/></svg>
<svg class="ab" style="left:390px;top:93px" width="9" height="9" viewBox="0 0 9 9"><rect x="0" y="0" width="9" height="9" rx="2" fill="#0a55b0"/><path d="M2.9 3.2 Q2.9 1.4 4.6 1.4 Q6.3 1.4 6.3 3 Q6.3 4 5.2 4.6 Q4.6 5 4.6 5.9" fill="none" stroke="#ffffff" stroke-width="1.35"/><rect x="3.9" y="6.6" width="1.4" height="1.4" fill="#ffffff"/></svg>
<div class="t" style="left:401px;top:93.5px;font-size:8.4px;letter-spacing:-0.4px;color:#383838">Cranking Dwell(ms)</div>
<div class="ab" style="left:525px;top:91px;width:37.50px;height:12px;background:#fff;border-top:1.5px solid #7a7a7a;border-left:1.5px solid #7a7a7a;border-bottom:1px solid #e4e4e4;border-right:1px solid #e4e4e4"></div>
<div class="ab" style="left:562.50px;top:91px;width:9.20px;height:6.00px;background:linear-gradient(#f4f8fc,#c9d9ea);border:1px solid #7f98b6"></div>
<div class="ab" style="left:562.50px;top:97.00px;width:9.20px;height:6.00px;background:linear-gradient(#f4f8fc,#c9d9ea);border:1px solid #7f98b6"></div>
<svg class="ab" style="left:564.60px;top:92.50px" width="5" height="3" viewBox="0 0 5 3"><path d="M1 2.6 H4 L2.5 0.6 Z" fill="#111"/></svg>
<svg class="ab" style="left:564.60px;top:98.50px" width="5" height="3" viewBox="0 0 5 3"><path d="M1 0.4 H4 L2.5 2.4 Z" fill="#111"/></svg>
<div class="t" style="left:526.5px;top:93.3px;font-size:8.6px;letter-spacing:-0.3px;color:#383838">5.0</div>
<svg class="ab" style="left:380px;top:107px" width="9" height="8" viewBox="0 0 9 8"><ellipse cx="4" cy="5" rx="4" ry="3" fill="#cfe6f6"/><ellipse cx="3.7" cy="4.7" rx="2.9" ry="2" fill="#fbfdff"/><path d="M4.2 4.6 L6.8 1.7" stroke="#e6b060" stroke-width="1.05"/><path d="M6.7 1.8 L7.7 0.6" stroke="#ea8ca4" stroke-width="1.1"/></svg>
<svg class="ab" style="left:390px;top:107px" width="9" height="9" viewBox="0 0 9 9"><rect x="0" y="0" width="9" height="9" rx="2" fill="#0a55b0"/><path d="M2.9 3.2 Q2.9 1.4 4.6 1.4 Q6.3 1.4 6.3 3 Q6.3 4 5.2 4.6 Q4.6 5 4.6 5.9" fill="none" stroke="#ffffff" stroke-width="1.35"/><rect x="3.9" y="6.6" width="1.4" height="1.4" fill="#ffffff"/></svg>
<div class="t" style="left:401px;top:107.5px;font-size:8.4px;letter-spacing:-0.4px;color:#383838">Cranking Advance(degrees)</div>
<div class="ab" style="left:525px;top:105px;width:37.50px;height:12px;background:#fff;border-top:1.5px solid #7a7a7a;border-left:1.5px solid #7a7a7a;border-bottom:1px solid #e4e4e4;border-right:1px solid #e4e4e4"></div>
<div class="ab" style="left:562.50px;top:105px;width:9.20px;height:6.00px;background:linear-gradient(#f4f8fc,#c9d9ea);border:1px solid #7f98b6"></div>
<div class="ab" style="left:562.50px;top:111.00px;width:9.20px;height:6.00px;background:linear-gradient(#f4f8fc,#c9d9ea);border:1px solid #7f98b6"></div>
<svg class="ab" style="left:564.60px;top:106.50px" width="5" height="3" viewBox="0 0 5 3"><path d="M1 2.6 H4 L2.5 0.6 Z" fill="#111"/></svg>
<svg class="ab" style="left:564.60px;top:112.50px" width="5" height="3" viewBox="0 0 5 3"><path d="M1 0.4 H4 L2.5 2.4 Z" fill="#111"/></svg>
<div class="t" style="left:526.5px;top:107.3px;font-size:8.6px;letter-spacing:-0.3px;color:#383838">15.0</div>
<svg class="ab" style="left:380px;top:132px" width="9" height="8" viewBox="0 0 9 8"><ellipse cx="4" cy="5" rx="4" ry="3" fill="#cfe6f6"/><ellipse cx="3.7" cy="4.7" rx="2.9" ry="2" fill="#fbfdff"/><path d="M4.2 4.6 L6.8 1.7" stroke="#e6b060" stroke-width="1.05"/><path d="M6.7 1.8 L7.7 0.6" stroke="#ea8ca4" stroke-width="1.1"/></svg>
<svg class="ab" style="left:390px;top:132px" width="9" height="9" viewBox="0 0 9 9"><rect x="0" y="0" width="9" height="9" rx="2" fill="#0a55b0"/><path d="M2.9 3.2 Q2.9 1.4 4.6 1.4 Q6.3 1.4 6.3 3 Q6.3 4 5.2 4.6 Q4.6 5 4.6 5.9" fill="none" stroke="#ffffff" stroke-width="1.35"/><rect x="3.9" y="6.6" width="1.4" height="1.4" fill="#ffffff"/></svg>
<div class="t" style="left:401px;top:132.5px;font-size:8.4px;letter-spacing:-0.4px;color:#383838">Toyota Multiplex</div>
<div class="ab" style="left:484.2px;top:129.5px;width:75.00px;height:14px;background:#eeeeee;border:1px solid #8aa6c6;border-right:none"></div>
<div class="ab" style="left:559.20px;top:129.5px;width:12.5px;height:14px;background:linear-gradient(#f6f9fc,#dfe8f2 50%,#c6d7ea);border:1px solid #8aa6c6"></div>
<svg class="ab" style="left:561.95px;top:134.50px" width="7" height="4" viewBox="0 0 7 4"><path d="M0.3 0.2 H6.7 L3.5 3.8 Z" fill="#111"/></svg>
<div class="t" style="left:486.2px;top:132.4px;font-size:8.5px;letter-spacing:-0.35px;color:#383838">Off</div>
<svg class="ab" style="left:380px;top:147px" width="9" height="8" viewBox="0 0 9 8"><ellipse cx="4" cy="5" rx="4" ry="3" fill="#cfe6f6"/><ellipse cx="3.7" cy="4.7" rx="2.9" ry="2" fill="#fbfdff"/><path d="M4.2 4.6 L6.8 1.7" stroke="#e6b060" stroke-width="1.05"/><path d="M6.7 1.8 L7.7 0.6" stroke="#ea8ca4" stroke-width="1.1"/></svg>
<svg class="ab" style="left:390px;top:147px" width="9" height="9" viewBox="0 0 9 9"><rect x="0" y="0" width="9" height="9" rx="2" fill="#0a55b0"/><path d="M2.9 3.2 Q2.9 1.4 4.6 1.4 Q6.3 1.4 6.3 3 Q6.3 4 5.2 4.6 Q4.6 5 4.6 5.9" fill="none" stroke="#ffffff" stroke-width="1.35"/><rect x="3.9" y="6.6" width="1.4" height="1.4" fill="#ffffff"/></svg>
<div class="t" style="left:401px;top:147.5px;font-size:8.4px;letter-spacing:-0.4px;color:#383838">Dwell type</div>
<div class="ab" style="left:484.2px;top:144.5px;width:75.00px;height:14px;background:#a9bdd5;border:1px solid #8aa6c6;border-right:none"></div>
<div class="ab" style="left:559.20px;top:144.5px;width:12.5px;height:14px;background:linear-gradient(#f6f9fc,#dfe8f2 50%,#c6d7ea);border:1px solid #8aa6c6"></div>
<svg class="ab" style="left:561.95px;top:149.50px" width="7" height="4" viewBox="0 0 7 4"><path d="M0.3 0.2 H6.7 L3.5 3.8 Z" fill="#111"/></svg>
<div class="t" style="left:486.2px;top:147.4px;font-size:8.5px;letter-spacing:-0.35px;color:#383838">Standard Dwell</div>
<svg class="ab" style="left:380px;top:162px" width="9" height="8" viewBox="0 0 9 8"><ellipse cx="4" cy="4.6" rx="3.5" ry="2.8" fill="#d2d2d2"/><path d="M4.5 2.5 L7.5 0.8 L7.5 7 L4.5 6 Z" fill="#d2d2d2"/></svg>
<svg class="ab" style="left:390px;top:162px" width="9" height="9" viewBox="0 0 9 9"><rect x="0" y="0" width="9" height="9" rx="2" fill="#cbcbcb"/><path d="M2.9 3.2 Q2.9 1.4 4.6 1.4 Q6.3 1.4 6.3 3 Q6.3 4 5.2 4.6 Q4.6 5 4.6 5.9" fill="none" stroke="#e4e4e4" stroke-width="1.35"/><rect x="3.9" y="6.6" width="1.4" height="1.4" fill="#e4e4e4"/></svg>
<div class="t" style="left:401px;top:162.5px;font-size:8.4px;letter-spacing:-0.4px;color:#a9a9a9">Use dwell vs rpm curve</div>
<div class="ab" style="left:484.2px;top:159.5px;width:75.00px;height:14px;background:#eeeeee;border:1px solid #a4bad4;border-right:none"></div>
<div class="ab" style="left:559.20px;top:159.5px;width:12.5px;height:14px;background:#eeeeee;border:1px solid #c8c8c8"></div>
<div class="ab" style="left:559.20px;top:159.5px;width:1px;height:14px;background:#a4bad4"></div>
<svg class="ab" style="left:561.95px;top:164.50px" width="7" height="4" viewBox="0 0 7 4"><path d="M0.3 0.2 H6.7 L3.5 3.8 Z" fill="#a9c2de"/></svg>
<div class="t" style="left:486.2px;top:162.4px;font-size:8.5px;letter-spacing:-0.35px;color:#a8c0dc">Off</div>
<svg class="ab" style="left:380px;top:177px" width="9" height="8" viewBox="0 0 9 8"><ellipse cx="4" cy="5" rx="4" ry="3" fill="#cfe6f6"/><ellipse cx="3.7" cy="4.7" rx="2.9" ry="2" fill="#fbfdff"/><path d="M4.2 4.6 L6.8 1.7" stroke="#e6b060" stroke-width="1.05"/><path d="M6.7 1.8 L7.7 0.6" stroke="#ea8ca4" stroke-width="1.1"/></svg>
<svg class="ab" style="left:390px;top:177px" width="9" height="9" viewBox="0 0 9 9"><rect x="0" y="0" width="9" height="9" rx="2" fill="#0a55b0"/><path d="M2.9 3.2 Q2.9 1.4 4.6 1.4 Q6.3 1.4 6.3 3 Q6.3 4 5.2 4.6 Q4.6 5 4.6 5.9" fill="none" stroke="#ffffff" stroke-width="1.35"/><rect x="3.9" y="6.6" width="1.4" height="1.4" fill="#ffffff"/></svg>
<div class="t" style="left:401px;top:177.2px;font-size:8.4px;letter-spacing:-0.4px;color:#383838">Nominal Dwell(ms)</div>
<div class="ab" style="left:525px;top:174.7px;width:37.50px;height:12px;background:#fff;border-top:1.5px solid #7a7a7a;border-left:1.5px solid #7a7a7a;border-bottom:1px solid #e4e4e4;border-right:1px solid #e4e4e4"></div>
<div class="ab" style="left:562.50px;top:174.7px;width:9.20px;height:6.00px;background:linear-gradient(#f4f8fc,#c9d9ea);border:1px solid #7f98b6"></div>
<div class="ab" style="left:562.50px;top:180.70px;width:9.20px;height:6.00px;background:linear-gradient(#f4f8fc,#c9d9ea);border:1px solid #7f98b6"></div>
<svg class="ab" style="left:564.60px;top:176.20px" width="5" height="3" viewBox="0 0 5 3"><path d="M1 2.6 H4 L2.5 0.6 Z" fill="#111"/></svg>
<svg class="ab" style="left:564.60px;top:182.20px" width="5" height="3" viewBox="0 0 5 3"><path d="M1 0.4 H4 L2.5 2.4 Z" fill="#111"/></svg>
<div class="t" style="left:526.5px;top:177.0px;font-size:8.6px;letter-spacing:-0.3px;color:#383838">3.5</div>
<svg class="ab" style="left:380px;top:190px" width="9" height="8" viewBox="0 0 9 8"><ellipse cx="4" cy="5" rx="4" ry="3" fill="#cfe6f6"/><ellipse cx="3.7" cy="4.7" rx="2.9" ry="2" fill="#fbfdff"/><path d="M4.2 4.6 L6.8 1.7" stroke="#e6b060" stroke-width="1.05"/><path d="M6.7 1.8 L7.7 0.6" stroke="#ea8ca4" stroke-width="1.1"/></svg>
<svg class="ab" style="left:390px;top:190px" width="9" height="9" viewBox="0 0 9 9"><rect x="0" y="0" width="9" height="9" rx="2" fill="#0a55b0"/><path d="M2.9 3.2 Q2.9 1.4 4.6 1.4 Q6.3 1.4 6.3 3 Q6.3 4 5.2 4.6 Q4.6 5 4.6 5.9" fill="none" stroke="#ffffff" stroke-width="1.35"/><rect x="3.9" y="6.6" width="1.4" height="1.4" fill="#ffffff"/></svg>
<div class="t" style="left:401px;top:190.8px;font-size:8.4px;letter-spacing:-0.4px;color:#383838">Spark Duration(ms)</div>
<div class="ab" style="left:525px;top:188.3px;width:37.50px;height:12px;background:#fff;border-top:1.5px solid #7a7a7a;border-left:1.5px solid #7a7a7a;border-bottom:1px solid #e4e4e4;border-right:1px solid #e4e4e4"></div>
<div class="ab" style="left:562.50px;top:188.3px;width:9.20px;height:6.00px;background:linear-gradient(#f4f8fc,#c9d9ea);border:1px solid #7f98b6"></div>
<div class="ab" style="left:562.50px;top:194.30px;width:9.20px;height:6.00px;background:linear-gradient(#f4f8fc,#c9d9ea);border:1px solid #7f98b6"></div>
<svg class="ab" style="left:564.60px;top:189.80px" width="5" height="3" viewBox="0 0 5 3"><path d="M1 2.6 H4 L2.5 0.6 Z" fill="#111"/></svg>
<svg class="ab" style="left:564.60px;top:195.80px" width="5" height="3" viewBox="0 0 5 3"><path d="M1 0.4 H4 L2.5 2.4 Z" fill="#111"/></svg>
<div class="t" style="left:526.5px;top:190.6px;font-size:8.6px;letter-spacing:-0.3px;color:#383838">1.0</div>
<svg class="ab" style="left:380px;top:204px" width="9" height="8" viewBox="0 0 9 8"><ellipse cx="4" cy="4.6" rx="3.5" ry="2.8" fill="#d2d2d2"/><path d="M4.5 2.5 L7.5 0.8 L7.5 7 L4.5 6 Z" fill="#d2d2d2"/></svg>
<svg class="ab" style="left:390px;top:204px" width="9" height="9" viewBox="0 0 9 9"><rect x="0" y="0" width="9" height="9" rx="2" fill="#cbcbcb"/><path d="M2.9 3.2 Q2.9 1.4 4.6 1.4 Q6.3 1.4 6.3 3 Q6.3 4 5.2 4.6 Q4.6 5 4.6 5.9" fill="none" stroke="#e4e4e4" stroke-width="1.35"/><rect x="3.9" y="6.6" width="1.4" height="1.4" fill="#e4e4e4"/></svg>
<div class="t" style="left:401px;top:205.0px;font-size:8.4px;letter-spacing:-0.4px;color:#a9a9a9">Dwell time(ms)</div>
<div class="ab" style="left:525px;top:202.5px;width:37.50px;height:12px;background:#fff;border-top:1.5px solid #9a9a9a;border-left:1.5px solid #9a9a9a;border-bottom:1px solid #e4e4e4;border-right:1px solid #e4e4e4"></div>
<div class="ab" style="left:562.50px;top:202.5px;width:9.20px;height:6.00px;background:#eeeeee;border:1px solid #b8b8b8"></div>
<div class="ab" style="left:562.50px;top:208.50px;width:9.20px;height:6.00px;background:#eeeeee;border:1px solid #b8b8b8"></div>
<svg class="ab" style="left:564.60px;top:204.00px" width="5" height="3" viewBox="0 0 5 3"><path d="M1 2.6 H4 L2.5 0.6 Z" fill="#9a9a9a"/></svg>
<svg class="ab" style="left:564.60px;top:210.00px" width="5" height="3" viewBox="0 0 5 3"><path d="M1 0.4 H4 L2.5 2.4 Z" fill="#9a9a9a"/></svg>
<div class="t" style="left:526.5px;top:204.8px;font-size:8.6px;letter-spacing:-0.3px;color:#a8c0dc">0.7</div>
<svg class="ab" style="left:380px;top:218px" width="9" height="8" viewBox="0 0 9 8"><ellipse cx="4" cy="4.6" rx="3.5" ry="2.8" fill="#d2d2d2"/><path d="M4.5 2.5 L7.5 0.8 L7.5 7 L4.5 6 Z" fill="#d2d2d2"/></svg>
<svg class="ab" style="left:390px;top:218px" width="9" height="9" viewBox="0 0 9 9"><rect x="0" y="0" width="9" height="9" rx="2" fill="#cbcbcb"/><path d="M2.9 3.2 Q2.9 1.4 4.6 1.4 Q6.3 1.4 6.3 3 Q6.3 4 5.2 4.6 Q4.6 5 4.6 5.9" fill="none" stroke="#e4e4e4" stroke-width="1.35"/><rect x="3.9" y="6.6" width="1.4" height="1.4" fill="#e4e4e4"/></svg>
<div class="t" style="left:401px;top:218.8px;font-size:8.4px;letter-spacing:-0.4px;color:#a9a9a9">Dwell duty(%)</div>
<div class="ab" style="left:525px;top:216.3px;width:37.50px;height:12px;background:#fff;border-top:1.5px solid #9a9a9a;border-left:1.5px solid #9a9a9a;border-bottom:1px solid #e4e4e4;border-right:1px solid #e4e4e4"></div>
<div class="ab" style="left:562.50px;top:216.3px;width:9.20px;height:6.00px;background:#eeeeee;border:1px solid #b8b8b8"></div>
<div class="ab" style="left:562.50px;top:222.30px;width:9.20px;height:6.00px;background:#eeeeee;border:1px solid #b8b8b8"></div>
<svg class="ab" style="left:564.60px;top:217.80px" width="5" height="3" viewBox="0 0 5 3"><path d="M1 2.6 H4 L2.5 0.6 Z" fill="#9a9a9a"/></svg>
<svg class="ab" style="left:564.60px;top:223.80px" width="5" height="3" viewBox="0 0 5 3"><path d="M1 0.4 H4 L2.5 2.4 Z" fill="#9a9a9a"/></svg>
<div class="t" style="left:526.5px;top:218.6px;font-size:8.6px;letter-spacing:-0.3px;color:#a8c0dc">50</div>
<svg class="ab" style="left:380px;top:254px" width="9" height="8" viewBox="0 0 9 8"><ellipse cx="4" cy="5" rx="4" ry="3" fill="#cfe6f6"/><ellipse cx="3.7" cy="4.7" rx="2.9" ry="2" fill="#fbfdff"/><path d="M4.2 4.6 L6.8 1.7" stroke="#e6b060" stroke-width="1.05"/><path d="M6.7 1.8 L7.7 0.6" stroke="#ea8ca4" stroke-width="1.1"/></svg>
<svg class="ab" style="left:390px;top:254px" width="9" height="9" viewBox="0 0 9 9"><rect x="0" y="0" width="9" height="9" rx="2" fill="#0a55b0"/><path d="M2.9 3.2 Q2.9 1.4 4.6 1.4 Q6.3 1.4 6.3 3 Q6.3 4 5.2 4.6 Q4.6 5 4.6 5.9" fill="none" stroke="#ffffff" stroke-width="1.35"/><rect x="3.9" y="6.6" width="1.4" height="1.4" fill="#ffffff"/></svg>
<div class="t" style="left:401px;top:254.7px;font-size:8.4px;letter-spacing:-0.4px;color:#383838">Spark Hardware Latency(usec)</div>
<div class="ab" style="left:525px;top:252.2px;width:37.50px;height:12px;background:#fff;border-top:1.5px solid #7a7a7a;border-left:1.5px solid #7a7a7a;border-bottom:1px solid #e4e4e4;border-right:1px solid #e4e4e4"></div>
<div class="ab" style="left:562.50px;top:252.2px;width:9.20px;height:6.00px;background:linear-gradient(#f4f8fc,#c9d9ea);border:1px solid #7f98b6"></div>
<div class="ab" style="left:562.50px;top:258.20px;width:9.20px;height:6.00px;background:linear-gradient(#f4f8fc,#c9d9ea);border:1px solid #7f98b6"></div>
<svg class="ab" style="left:564.60px;top:253.70px" width="5" height="3" viewBox="0 0 5 3"><path d="M1 2.6 H4 L2.5 0.6 Z" fill="#111"/></svg>
<svg class="ab" style="left:564.60px;top:259.70px" width="5" height="3" viewBox="0 0 5 3"><path d="M1 0.4 H4 L2.5 2.4 Z" fill="#111"/></svg>
<div class="t" style="left:526.5px;top:254.5px;font-size:8.6px;letter-spacing:-0.3px;color:#383838">21</div>
<svg class="ab" style="left:380px;top:268px" width="9" height="8" viewBox="0 0 9 8"><ellipse cx="4" cy="4.6" rx="3.5" ry="2.8" fill="#d2d2d2"/><path d="M4.5 2.5 L7.5 0.8 L7.5 7 L4.5 6 Z" fill="#d2d2d2"/></svg>
<svg class="ab" style="left:390px;top:268px" width="9" height="9" viewBox="0 0 9 9"><rect x="0" y="0" width="9" height="9" rx="2" fill="#cbcbcb"/><path d="M2.9 3.2 Q2.9 1.4 4.6 1.4 Q6.3 1.4 6.3 3 Q6.3 4 5.2 4.6 Q4.6 5 4.6 5.9" fill="none" stroke="#e4e4e4" stroke-width="1.35"/><rect x="3.9" y="6.6" width="1.4" height="1.4" fill="#e4e4e4"/></svg>
<div class="t" style="left:401px;top:269.0px;font-size:8.4px;letter-spacing:-0.4px;color:#a9a9a9">middle LED indicator</div>
<div class="ab" style="left:474.2px;top:266px;width:85.00px;height:14px;background:#eeeeee;border:1px solid #a4bad4;border-right:none"></div>
<div class="ab" style="left:559.20px;top:266px;width:12.5px;height:14px;background:#eeeeee;border:1px solid #c8c8c8"></div>
<div class="ab" style="left:559.20px;top:266px;width:1px;height:14px;background:#a4bad4"></div>
<svg class="ab" style="left:561.95px;top:271.00px" width="7" height="4" viewBox="0 0 7 4"><path d="M0.3 0.2 H6.7 L3.5 3.8 Z" fill="#a9c2de"/></svg>
<div class="t" style="left:476.2px;top:268.9px;font-size:8.5px;letter-spacing:-0.35px;color:#a8c0dc">Off</div>
<svg class="ab" style="left:380px;top:295px" width="9" height="8" viewBox="0 0 9 8"><ellipse cx="4" cy="5" rx="4" ry="3" fill="#cfe6f6"/><ellipse cx="3.7" cy="4.7" rx="2.9" ry="2" fill="#fbfdff"/><path d="M4.2 4.6 L6.8 1.7" stroke="#e6b060" stroke-width="1.05"/><path d="M6.7 1.8 L7.7 0.6" stroke="#ea8ca4" stroke-width="1.1"/></svg>
<svg class="ab" style="left:390px;top:295px" width="9" height="9" viewBox="0 0 9 9"><rect x="0" y="0" width="9" height="9" rx="2" fill="#0a55b0"/><path d="M2.9 3.2 Q2.9 1.4 4.6 1.4 Q6.3 1.4 6.3 3 Q6.3 4 5.2 4.6 Q4.6 5 4.6 5.9" fill="none" stroke="#ffffff" stroke-width="1.35"/><rect x="3.9" y="6.6" width="1.4" height="1.4" fill="#ffffff"/></svg>
<div class="t" style="left:401px;top:295.5px;font-size:8.4px;letter-spacing:-0.4px;color:#383838">Spark trim</div>
<div class="ab" style="left:484.2px;top:292.5px;width:75.00px;height:14px;background:#eeeeee;border:1px solid #8aa6c6;border-right:none"></div>
<div class="ab" style="left:559.20px;top:292.5px;width:12.5px;height:14px;background:linear-gradient(#f6f9fc,#dfe8f2 50%,#c6d7ea);border:1px solid #8aa6c6"></div>
<svg class="ab" style="left:561.95px;top:297.50px" width="7" height="4" viewBox="0 0 7 4"><path d="M0.3 0.2 H6.7 L3.5 3.8 Z" fill="#111"/></svg>
<div class="t" style="left:486.2px;top:295.4px;font-size:8.5px;letter-spacing:-0.35px;color:#383838">Off</div>
<div class="t" style="left:380px;top:231px;font-size:7.5px;font-weight:bold;letter-spacing:-0.1px;color:#2a2a2a">NOTE: Spark hardware latency should ONLY be used if</div>
<div class="t" style="left:380px;top:242px;font-size:7.5px;font-weight:bold;letter-spacing:-0.1px;color:#2a2a2a">you notice spark retard with increasing rpms.</div>
<div class="t" style="left:380px;top:317px;font-size:7.5px;font-weight:bold;letter-spacing:-0.1px;color:#2a2a2a">Custom oddfire angles in sequence from #1</div>
<svg class="ab" style="left:380px;top:338px" width="9" height="8" viewBox="0 0 9 8"><ellipse cx="4" cy="4.6" rx="3.5" ry="2.8" fill="#d2d2d2"/><path d="M4.5 2.5 L7.5 0.8 L7.5 7 L4.5 6 Z" fill="#d2d2d2"/></svg>
<svg class="ab" style="left:390px;top:338px" width="9" height="9" viewBox="0 0 9 9"><rect x="0" y="0" width="9" height="9" rx="2" fill="#cbcbcb"/><path d="M2.9 3.2 Q2.9 1.4 4.6 1.4 Q6.3 1.4 6.3 3 Q6.3 4 5.2 4.6 Q4.6 5 4.6 5.9" fill="none" stroke="#e4e4e4" stroke-width="1.35"/><rect x="3.9" y="6.6" width="1.4" height="1.4" fill="#e4e4e4"/></svg>
<div class="t" style="left:401px;top:338.8px;font-size:8.4px;letter-spacing:-0.4px;color:#a9a9a9">1st</div>
<div class="ab" style="left:427px;top:336.5px;width:38.00px;height:12px;background:#fff;border-top:1.5px solid #9a9a9a;border-left:1.5px solid #9a9a9a;border-bottom:1px solid #e4e4e4;border-right:1px solid #e4e4e4"></div>
<div class="ab" style="left:465.00px;top:336.5px;width:8.75px;height:6.00px;background:#eeeeee;border:1px solid #b8b8b8"></div>
<div class="ab" style="left:465.00px;top:342.50px;width:8.75px;height:6.00px;background:#eeeeee;border:1px solid #b8b8b8"></div>
<svg class="ab" style="left:466.88px;top:338.00px" width="5" height="3" viewBox="0 0 5 3"><path d="M1 2.6 H4 L2.5 0.6 Z" fill="#9a9a9a"/></svg>
<svg class="ab" style="left:466.88px;top:344.00px" width="5" height="3" viewBox="0 0 5 3"><path d="M1 0.4 H4 L2.5 2.4 Z" fill="#9a9a9a"/></svg>
<div class="t" style="left:428.5px;top:338.8px;font-size:8.6px;letter-spacing:-0.3px;color:#a8c0dc">0</div>
<svg class="ab" style="left:476.5px;top:338px" width="9" height="8" viewBox="0 0 9 8"><ellipse cx="4" cy="4.6" rx="3.5" ry="2.8" fill="#d2d2d2"/><path d="M4.5 2.5 L7.5 0.8 L7.5 7 L4.5 6 Z" fill="#d2d2d2"/></svg>
<svg class="ab" style="left:486.5px;top:338px" width="9" height="9" viewBox="0 0 9 9"><rect x="0" y="0" width="9" height="9" rx="2" fill="#cbcbcb"/><path d="M2.9 3.2 Q2.9 1.4 4.6 1.4 Q6.3 1.4 6.3 3 Q6.3 4 5.2 4.6 Q4.6 5 4.6 5.9" fill="none" stroke="#e4e4e4" stroke-width="1.35"/><rect x="3.9" y="6.6" width="1.4" height="1.4" fill="#e4e4e4"/></svg>
<div class="t" style="left:497.5px;top:338.8px;font-size:8.4px;letter-spacing:-0.4px;color:#a9a9a9">2nd</div>
<div class="ab" style="left:524.8px;top:336.5px;width:37.60px;height:12px;background:#fff;border-top:1.5px solid #9a9a9a;border-left:1.5px solid #9a9a9a;border-bottom:1px solid #e4e4e4;border-right:1px solid #e4e4e4"></div>
<div class="ab" style="left:562.40px;top:336.5px;width:8.60px;height:6.00px;background:#eeeeee;border:1px solid #b8b8b8"></div>
<div class="ab" style="left:562.40px;top:342.50px;width:8.60px;height:6.00px;background:#eeeeee;border:1px solid #b8b8b8"></div>
<svg class="ab" style="left:564.20px;top:338.00px" width="5" height="3" viewBox="0 0 5 3"><path d="M1 2.6 H4 L2.5 0.6 Z" fill="#9a9a9a"/></svg>
<svg class="ab" style="left:564.20px;top:344.00px" width="5" height="3" viewBox="0 0 5 3"><path d="M1 0.4 H4 L2.5 2.4 Z" fill="#9a9a9a"/></svg>
<div class="t" style="left:526.3px;top:338.8px;font-size:8.6px;letter-spacing:-0.3px;color:#a8c0dc">0</div>
<svg class="ab" style="left:380px;top:361px" width="9" height="8" viewBox="0 0 9 8"><ellipse cx="4" cy="4.6" rx="3.5" ry="2.8" fill="#d2d2d2"/><path d="M4.5 2.5 L7.5 0.8 L7.5 7 L4.5 6 Z" fill="#d2d2d2"/></svg>
<svg class="ab" style="left:390px;top:361px" width="9" height="9" viewBox="0 0 9 9"><rect x="0" y="0" width="9" height="9" rx="2" fill="#cbcbcb"/><path d="M2.9 3.2 Q2.9 1.4 4.6 1.4 Q6.3 1.4 6.3 3 Q6.3 4 5.2 4.6 Q4.6 5 4.6 5.9" fill="none" stroke="#e4e4e4" stroke-width="1.35"/><rect x="3.9" y="6.6" width="1.4" height="1.4" fill="#e4e4e4"/></svg>
<div class="t" style="left:401px;top:361.8px;font-size:8.4px;letter-spacing:-0.4px;color:#a9a9a9">3rd</div>
<div class="ab" style="left:429px;top:359.5px;width:37.25px;height:12px;background:#fff;border-top:1.5px solid #9a9a9a;border-left:1.5px solid #9a9a9a;border-bottom:1px solid #e4e4e4;border-right:1px solid #e4e4e4"></div>
<div class="ab" style="left:466.25px;top:359.5px;width:7.25px;height:6.00px;background:#eeeeee;border:1px solid #b8b8b8"></div>
<div class="ab" style="left:466.25px;top:365.50px;width:7.25px;height:6.00px;background:#eeeeee;border:1px solid #b8b8b8"></div>
<svg class="ab" style="left:467.38px;top:361.00px" width="5" height="3" viewBox="0 0 5 3"><path d="M1 2.6 H4 L2.5 0.6 Z" fill="#9a9a9a"/></svg>
<svg class="ab" style="left:467.38px;top:367.00px" width="5" height="3" viewBox="0 0 5 3"><path d="M1 0.4 H4 L2.5 2.4 Z" fill="#9a9a9a"/></svg>
<div class="t" style="left:430.5px;top:361.8px;font-size:8.6px;letter-spacing:-0.3px;color:#a8c0dc">60</div>
<svg class="ab" style="left:477.5px;top:361px" width="9" height="8" viewBox="0 0 9 8"><ellipse cx="4" cy="4.6" rx="3.5" ry="2.8" fill="#d2d2d2"/><path d="M4.5 2.5 L7.5 0.8 L7.5 7 L4.5 6 Z" fill="#d2d2d2"/></svg>
<svg class="ab" style="left:487.5px;top:361px" width="9" height="9" viewBox="0 0 9 9"><rect x="0" y="0" width="9" height="9" rx="2" fill="#cbcbcb"/><path d="M2.9 3.2 Q2.9 1.4 4.6 1.4 Q6.3 1.4 6.3 3 Q6.3 4 5.2 4.6 Q4.6 5 4.6 5.9" fill="none" stroke="#e4e4e4" stroke-width="1.35"/><rect x="3.9" y="6.6" width="1.4" height="1.4" fill="#e4e4e4"/></svg>
<div class="t" style="left:498.5px;top:361.8px;font-size:8.4px;letter-spacing:-0.4px;color:#a9a9a9">4th</div>
<div class="ab" style="left:525.2px;top:359.5px;width:37.40px;height:12px;background:#fff;border-top:1.5px solid #9a9a9a;border-left:1.5px solid #9a9a9a;border-bottom:1px solid #e4e4e4;border-right:1px solid #e4e4e4"></div>
<div class="ab" style="left:562.60px;top:359.5px;width:8.40px;height:6.00px;background:#eeeeee;border:1px solid #b8b8b8"></div>
<div class="ab" style="left:562.60px;top:365.50px;width:8.40px;height:6.00px;background:#eeeeee;border:1px solid #b8b8b8"></div>
<svg class="ab" style="left:564.30px;top:361.00px" width="5" height="3" viewBox="0 0 5 3"><path d="M1 2.6 H4 L2.5 0.6 Z" fill="#9a9a9a"/></svg>
<svg class="ab" style="left:564.30px;top:367.00px" width="5" height="3" viewBox="0 0 5 3"><path d="M1 0.4 H4 L2.5 2.4 Z" fill="#9a9a9a"/></svg>
<div class="t" style="left:526.7px;top:361.8px;font-size:8.6px;letter-spacing:-0.3px;color:#a8c0dc">60</div>
<div class="ab" style="left:409.5px;top:390.5px;width:40.9px;height:20px;background:#efefef;border:1px solid #ababab;border-radius:1px"></div>
<svg class="ab" style="left:422.95px;top:393.5px" width="15" height="15" viewBox="0 0 15 15"><path d="M2.5 3.2 Q10 2.5 11.5 9 L12 13" fill="none" stroke="#c6c6c6" stroke-width="3.8" stroke-linecap="round"/><rect x="1" y="0.8" width="4.5" height="6" fill="#c6c6c6"/></svg>
<div class="ab" style="left:452.3px;top:390.5px;width:40.3px;height:20px;background:#efefef;border:1px solid #ababab;border-radius:1px"></div>
<svg class="ab" style="left:465.45000000000005px;top:393.5px" width="15" height="15" viewBox="0 0 15 15"><path d="M12.5 4 Q5 3.5 3.5 9 L3.5 13" fill="none" stroke="#c6c6c6" stroke-width="3.8" stroke-linecap="round"/><rect x="9.5" y="1.2" width="4.5" height="6" fill="#c6c6c6"/></svg>
<div class="ab" style="left:494.5px;top:390.5px;width:40.9px;height:20px;background:linear-gradient(#fcfdfe,#e6eef6 50%,#c8daee);border:1px solid #8aa4c2;border-radius:1px"></div>
<div class="t" style="left:494.5px;top:397px;width:40.9px;text-align:center;font-size:7.6px;font-weight:bold;color:#222"><u>B</u>urn</div>
<div class="ab" style="left:537.3px;top:390.5px;width:40.4px;height:20px;background:linear-gradient(#fcfdfe,#e6eef6 50%,#c8daee);border:1px solid #8aa4c2;border-radius:1px"></div>
<div class="t" style="left:537.3px;top:397px;width:40.4px;text-align:center;font-size:7.6px;font-weight:bold;color:#222"><u>C</u>lose</div>
</body></html>
